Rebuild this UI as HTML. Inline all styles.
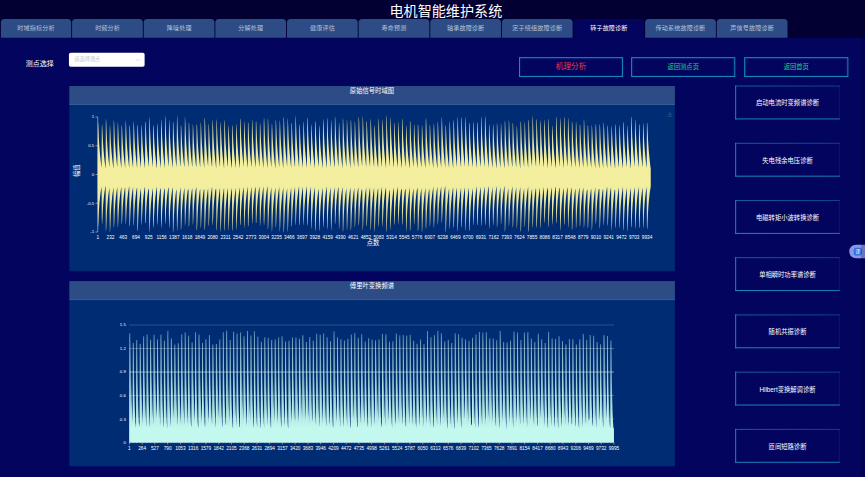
<!DOCTYPE html>
<html lang="zh"><head><meta charset="utf-8"><title>电机智能维护系统</title>
<style>
html,body{margin:0;padding:0;width:865px;height:477px;overflow:hidden;background:#03045e}
#pg{position:absolute;left:0;top:0;width:1920px;height:1059px;transform:scale(0.450521);transform-origin:0 0;background:#03045e;overflow:hidden;font-family:"Liberation Sans","Noto Sans CJK SC",sans-serif;color:#fff}
#hd{position:absolute;left:0;top:0;width:1920px;height:84px;background:#020033}
#ttl{position:absolute;left:789.7px;top:4.5px;width:400px;text-align:center;font-size:31.3px;line-height:40px;color:#fff;white-space:nowrap}
.tab{position:absolute;top:42px;width:156.8px;height:42px;background:#2d4c85;border-radius:8px 8px 0 0;text-align:center;font-size:13.5px;letter-spacing:.3px;line-height:42px;color:#b9c3d9;white-space:nowrap}
.tab.on{background:#03045e;color:#fff}
#lbl{position:absolute;left:57px;top:130px;font-size:15.5px;line-height:22px;color:#fff;white-space:nowrap}
#sel{position:absolute;left:153px;top:117px;width:168px;height:31px;background:#fff;border-radius:4px;box-sizing:border-box}
#sel span{position:absolute;left:12px;top:0;line-height:31px;font-size:11.5px;color:#c0c4cc;white-space:nowrap}
#sel svg{position:absolute;right:9px;top:10px}
.btn{position:absolute;top:126.5px;width:231px;height:44px;box-sizing:border-box;border:2px solid #1a9ac8;text-align:center;line-height:40px;font-size:14px;color:#19d68a;white-space:nowrap;box-shadow:inset 0 0 6px rgba(26,154,200,.35)}
.panel{position:absolute;left:153.6px;width:1344px;height:411px;background:#002c73}
.panel .pt{position:absolute;left:0;top:0;width:100%;height:41.6px;background:#2d4b84;box-sizing:border-box;border-bottom:1px solid #3878b4;text-align:center;font-size:14px;line-height:20px;color:#fff}
.sbtn{position:absolute;left:1632px;width:232px;height:75px;box-sizing:border-box;background:linear-gradient(#1b94c6,#1b94c6) left top/2px 100% no-repeat,linear-gradient(to right,#1b94c6,#1b86c2) left bottom/100% 2px no-repeat,linear-gradient(to right,#1765a8,#10458c) left top/100% 2px no-repeat,linear-gradient(rgba(18,79,156,.3),rgba(18,79,156,.3)) right top/2px 100% no-repeat;text-align:center;font-size:14px;line-height:79px;color:#fff;white-space:nowrap;overflow:hidden}
#cut{position:absolute;left:1864px;top:84px;width:56px;height:975px;background:#03045e}
#pill{position:absolute;left:1885px;top:543px;width:60px;height:30px;border-radius:16px;background:#8b97e6}
#pill i{position:absolute;left:10px;top:7px;width:18px;height:17px;border-radius:4px;background:#2f6fe0;font-style:normal;font-size:11px;line-height:17px;text-align:center;color:#fff}
#strip{position:absolute;left:1911px;top:0;width:9px;height:1059px;background:rgba(0,0,30,.22)}
svg text.ax{font-size:10.5px;fill:#fff;font-family:"Liberation Sans",sans-serif}
svg text.ay{font-size:9.5px;fill:#fff;font-family:"Liberation Sans",sans-serif}
svg text.axn{font-size:14px;fill:#fff;font-family:"Liberation Sans","Noto Sans CJK SC",sans-serif}
#chart{position:absolute;left:0;top:0}
</style></head><body>
<div id="pg">
<div id="hd"></div>
<div id="ttl">电机智能维护系统</div>
<div class="tab" style="left:1.5px">时域指标分析</div><div class="tab" style="left:160.4px">时频分析</div><div class="tab" style="left:319.4px">降噪处理</div><div class="tab" style="left:478.3px">分解处理</div><div class="tab" style="left:637.3px">健康评估</div><div class="tab" style="left:796.2px">寿命预测</div><div class="tab" style="left:955.2px">轴承故障诊断</div><div class="tab" style="left:1114.1px">定子绕组故障诊断</div><div class="tab on" style="left:1273.1px">转子故障诊断</div><div class="tab" style="left:1432px">传动系统故障诊断</div><div class="tab" style="left:1591px">声信号故障诊断</div>
<div id="lbl">测点选择</div>
<div id="sel"><span>请选择测点</span><svg width="12" height="12" viewBox="0 0 12 12"><path d="M2 4l4 4 4-4" fill="none" stroke="#c0c4cc" stroke-width="1.3"/></svg></div>
<div class="btn" style="left:1152px;color:#f5343f;font-size:17px">机理分析</div>
<div class="btn" style="left:1401px">返回测点页</div>
<div class="btn" style="left:1652px">返回首页</div>
<div class="panel" style="top:191px"><div class="pt">原始信号时域图</div></div>
<div class="panel" style="top:624.3px"><div class="pt">傅里叶变换频谱</div></div>
<div class="sbtn" style="top:190px"><span>启动电流时变频谱诊断</span></div><div class="sbtn" style="top:317px"><span>失电残余电压诊断</span></div><div class="sbtn" style="top:444px"><span>电磁转矩小波转换诊断</span></div><div class="sbtn" style="top:571px"><span>单相瞬时功率谱诊断</span></div><div class="sbtn" style="top:698px"><span>随机共振诊断</span></div><div class="sbtn" style="top:825px"><span>Hilbert变换解调诊断</span></div><div class="sbtn" style="top:952px"><span>匝间短路诊断</span></div>
<svg id="chart" width="1920" height="1059" viewBox="0 0 1920 1059">
<defs>
<linearGradient id="g1" x1="0" y1="254.7" x2="0" y2="520" gradientUnits="userSpaceOnUse">
<stop offset="0" stop-color="#f3ef9f" stop-opacity=".78"/><stop offset=".22" stop-color="#f3ef9f" stop-opacity=".95"/><stop offset=".42" stop-color="#f3ef9f" stop-opacity="1"/><stop offset=".58" stop-color="#f3ef9f" stop-opacity="1"/><stop offset=".78" stop-color="#f3ef9f" stop-opacity=".95"/><stop offset="1" stop-color="#f3ef9f" stop-opacity=".82"/>
</linearGradient>
<linearGradient id="g2" x1="0" y1="721.4" x2="0" y2="982.4" gradientUnits="userSpaceOnUse">
<stop offset="0" stop-color="#c2f8ee" stop-opacity=".28"/><stop offset=".4" stop-color="#c2f8ee" stop-opacity=".42"/><stop offset=".6" stop-color="#c2f8ee" stop-opacity=".7"/><stop offset=".8" stop-color="#c2f8ee" stop-opacity=".93"/><stop offset=".88" stop-color="#c2f8ee" stop-opacity="1"/><stop offset="1" stop-color="#c2f8ee" stop-opacity="1"/>
</linearGradient>
<linearGradient id="g3" x1="0" y1="721.4" x2="0" y2="982.4" gradientUnits="userSpaceOnUse">
<stop offset="0" stop-color="#c2f8ee" stop-opacity=".5"/><stop offset=".5" stop-color="#c2f8ee" stop-opacity=".85"/><stop offset="1" stop-color="#c2f8ee" stop-opacity="1"/>
</linearGradient>
</defs>
<path d="M216.9,340.5 217.4,271.5 217.9,272.8 218.4,278.3 218.9,290.8 219.4,303.4 219.9,314.2 220.4,321.9 220.9,329.4 221.4,335.2 221.9,341 222.4,346.3 222.9,351.2 223.4,356.1 223.9,360.5 224.4,364.9 224.9,369.2 225.4,372.7 225.9,290 226.4,276 226.9,277.3 227.4,287.6 227.9,299.7 228.4,311.9 228.9,320.1 229.4,327.5 229.9,333.9 230.4,339.5 230.9,345.1 231.4,349.9 231.9,354.7 232.4,359.2 232.9,363.4 233.4,367.6 233.9,371.4 234.4,374.7 234.9,263.9 235.4,265.4 235.9,270.3 236.4,283.7 236.9,297.1 237.4,308.9 237.9,317.1 238.4,325.2 238.9,331.4 239.4,337.5 239.9,343.3 240.4,348.5 240.9,353.8 241.4,358.5 241.9,363.1 242.4,367.7 242.9,371.5 243.4,299.4 243.9,277.7 244.4,278.9 244.9,288.3 245.4,300.3 245.9,312.3 246.4,320.6 246.9,328 247.4,334.4 247.9,339.9 248.4,345.4 248.9,350.2 249.4,354.8 249.9,359.4 250.4,363.5 250.9,367.6 251.4,371.5 251.9,374.6 252.4,266.5 252.9,267.8 253.4,271.9 253.9,284.9 254.4,298.1 254.9,310 255.4,318 255.9,326 256.4,332.1 256.9,338.2 257.4,343.9 257.9,349 258.4,354.1 258.9,358.8 259.4,363.3 259.9,367.8 260.4,371.6 260.9,302.4 261.4,270.9 261.9,272.3 262.4,281.4 262.9,294.1 263.4,306.8 263.9,316.1 264.4,323.8 264.9,330.8 265.4,336.6 265.9,342.5 266.4,347.6 266.9,352.5 267.4,357.4 267.9,361.7 268.4,366.1 268.9,370.3 269.4,373.6 269.9,277.2 270.4,278.5 270.9,281.4 271.4,293.3 271.9,305.2 272.4,316.4 272.9,323.7 273.4,331 273.9,336.7 274.4,342.2 274.9,347.5 275.4,352.1 275.9,356.8 276.4,361.1 276.9,365.2 277.4,369.3 277.9,372.8 278.4,308.6 278.9,267.6 279.4,269 279.9,277.6 280.4,290.6 280.9,303.7 281.4,313.5 281.9,321.5 282.4,328.8 282.9,334.8 283.4,340.8 283.9,346.1 284.4,351.2 284.9,356.2 285.4,360.7 285.9,365.2 286.4,369.5 286.9,373 287.4,277.6 287.9,278.9 288.4,281 288.9,292.9 289.4,304.7 289.9,316.2 290.4,323.5 290.9,330.7 291.4,336.5 291.9,342 292.4,347.3 292.9,351.9 293.4,356.6 293.9,360.9 294.4,365 294.9,369 295.4,372.6 295.9,318.2 296.4,269.2 296.9,270.6 297.4,278.2 297.9,291 298.4,303.9 298.9,314 299.4,321.9 299.9,329.2 300.4,335.1 300.9,341 301.4,346.3 301.9,351.3 302.4,356.3 302.9,360.8 303.4,365.2 303.9,369.5 304.4,373 304.9,276.8 305.4,278.1 305.9,279.5 306.4,291.4 306.9,303.3 307.4,315.2 307.9,322.5 308.4,329.8 308.9,335.8 309.4,341.3 309.9,346.7 310.4,351.4 310.9,356 311.4,360.4 311.9,364.5 312.4,368.6 312.9,372.3 313.4,330.7 313.9,276.9 314.4,278.2 314.9,284.5 315.4,296.5 315.9,308.6 316.4,318.3 316.9,325.6 317.4,332.6 317.9,338.1 318.4,343.7 318.9,348.7 319.4,353.4 319.9,358.1 320.4,362.2 320.9,366.3 321.4,370.5 321.9,373.7 322.4,272 322.9,270 323.4,271.3 323.9,283.4 324.4,296.3 324.9,309.1 325.4,317.2 325.9,325.1 326.4,331.6 326.9,337.5 327.4,343.4 327.9,348.4 328.4,353.4 328.9,358.1 329.4,362.5 329.9,366.9 330.4,370.9 330.9,331.3 331.4,260.1 331.9,261.6 332.4,268 332.9,281.8 333.4,295.7 333.9,307.2 334.4,315.7 334.9,323.9 335.4,330.2 335.9,336.6 336.4,342.5 336.9,347.9 337.4,353.2 337.9,358.1 338.4,362.8 338.9,367.6 339.4,371.3 339.9,286.6 340.4,276.7 340.9,277.9 341.4,288.6 341.9,300.7 342.4,312.8 342.9,320.7 343.4,328.1 343.9,334.4 344.4,340 344.9,345.6 345.4,350.3 345.9,355 346.4,359.5 346.9,363.7 347.4,367.8 347.9,371.6 348.4,374.8 348.9,273.7 349.4,275 349.9,280 350.4,292.3 350.9,304.6 351.4,315.3 351.9,322.9 352.4,330.3 352.9,336 353.4,341.7 353.9,347 354.4,351.8 354.9,356.6 355.4,360.9 355.9,365.2 356.4,369.4 356.9,372.8 357.4,284.9 357.9,265.2 358.4,266.6 358.9,277.5 359.4,290.8 359.9,304.2 360.4,313.3 360.9,321.5 361.4,328.6 361.9,334.7 362.4,340.8 362.9,346.1 363.4,351.3 363.9,356.3 364.4,360.9 364.9,365.5 365.4,369.8 365.9,373.3 366.4,257.1 366.9,258.6 367.4,263.4 367.9,277.5 368.4,291.7 368.9,304.3 369.4,312.9 369.9,321.6 370.4,328.1 370.9,334.6 371.4,340.7 371.9,346.2 372.4,351.7 372.9,356.7 373.4,361.6 373.9,366.5 374.4,370.5 374.9,294.6 375.4,266.2 375.9,267.6 376.4,277.6 376.9,290.8 377.4,304 377.9,313.4 378.4,321.5 378.9,328.7 379.4,334.7 379.9,340.8 380.4,346.1 380.9,351.3 381.4,356.3 381.9,360.8 382.4,365.4 382.9,369.7 383.4,373.2 383.9,269.6 384.4,270.9 384.9,274.5 385.4,287.2 385.9,300 386.4,311.7 386.9,319.5 387.4,327.4 387.9,333.4 388.4,339.2 388.9,344.9 389.4,349.8 389.9,354.8 390.4,359.4 390.9,363.8 391.4,368.1 391.9,371.9 392.4,297 392.9,257.1 393.4,258.6 393.9,268.4 394.4,282.5 394.9,296.8 395.4,307.3 395.9,316 396.4,323.8 396.9,330.4 397.4,336.9 397.9,342.7 398.4,348.2 398.9,353.6 399.4,358.5 399.9,363.4 400.4,368.1 400.9,370.2 401.4,277.4 401.9,278.7 402.4,281.2 402.9,293.1 403.4,305 403.9,316.3 404.4,323.6 404.9,330.9 405.4,336.6 405.9,342.1 406.4,347.4 406.9,352 407.4,356.7 407.9,361 408.4,365.1 408.9,369.2 409.4,370.3 409.9,308 410.4,259.6 410.9,261.1 411.4,269.8 411.9,283.7 412.4,297.6 412.9,308.3 413.4,316.8 413.9,324.7 414.4,331.1 414.9,337.5 415.4,343.2 415.9,348.6 416.4,354 416.9,358.8 417.4,363.5 417.9,368.2 418.4,371.9 418.9,271.8 419.4,273.1 419.9,275 420.4,287.5 420.9,300 421.4,312.2 421.9,319.8 422.4,327.5 422.9,333.7 423.4,339.4 423.9,345 424.4,349.9 424.9,354.8 425.4,359.3 425.9,363.6 426.4,367.9 426.9,371.7 427.4,326.1 427.9,275.7 428.4,277 428.9,283.8 429.4,295.9 429.9,308.1 430.4,317.8 430.9,325.2 431.4,332.2 431.9,337.8 432.4,343.4 432.9,348.4 433.4,353.2 433.9,357.9 434.4,362.1 434.9,366.3 435.4,370.4 435.9,369 436.4,275.6 436.9,276.9 437.4,278.2 437.9,290 438.4,302.1 438.9,314.2 439.4,321.6 439.9,329 440.4,335.1 440.9,340.6 441.4,346.1 441.9,350.8 442.4,355.5 442.9,360 443.4,364.1 443.9,368.3 444.4,371.7 444.9,332.3 445.4,271.9 445.9,273.2 446.4,279.5 446.9,292 447.4,304.6 447.9,314.9 448.4,322.6 448.9,330 449.4,335.7 449.9,341.5 450.4,346.8 450.9,351.7 451.4,356.6 451.9,360.9 452.4,365.2 452.9,369.6 453.4,372.9 453.9,267.8 454.4,261.1 454.9,262.5 455.4,275.1 455.9,288.9 456.4,302.8 456.9,311.6 457.4,320.1 457.9,327.2 458.4,333.5 458.9,339.9 459.4,345.2 459.9,350.6 460.4,355.8 460.9,360.5 461.4,365.2 461.9,369.5 462.4,341.8 462.9,274.7 463.4,276 463.9,281.3 464.4,293.5 464.9,305.8 465.4,316.2 465.9,323.7 466.4,331 466.9,336.6 467.4,342.3 467.9,347.5 468.4,352.2 468.9,357 469.4,361.3 469.9,365.5 470.4,369.7 470.9,368.6 471.4,281.5 471.9,266.3 472.4,267.7 472.9,278.9 473.4,292.1 473.9,305.4 474.4,314.2 474.9,322.3 475.4,329.3 475.9,335.4 476.4,341.4 476.9,346.6 477.4,351.8 477.9,356.8 478.4,361.3 478.9,365.8 479.4,370 479.9,373.6 480.4,264.2 480.9,265.6 481.4,270.6 481.9,283.9 482.4,297.3 482.9,309 483.4,317.2 483.9,325.4 484.4,331.5 484.9,337.7 485.4,343.4 485.9,348.6 486.4,353.8 486.9,358.6 487.4,363.2 487.9,367.7 488.4,371.5 488.9,293.9 489.4,270.9 489.9,272.2 490.4,282.2 490.9,294.9 491.4,307.6 491.9,316.5 492.4,324.3 492.9,331.1 493.4,337 493.9,342.8 494.4,347.9 494.9,352.8 495.4,357.6 495.9,362 496.4,366.4 496.9,370.5 497.4,373.9 497.9,266.2 498.4,267.6 498.9,271.6 499.4,284.7 499.9,297.9 500.4,309.8 500.9,317.8 501.4,325.9 501.9,332 502.4,338.1 502.9,343.8 503.4,348.9 503.9,354 504.4,358.7 504.9,363.2 505.4,367.8 505.9,371.5 506.4,307.4 506.9,277.8 507.4,279.1 507.9,287.7 508.4,299.6 508.9,311.6 509.4,320.3 509.9,327.6 510.4,334.1 510.9,339.6 511.4,345.1 511.9,349.9 512.4,354.6 512.9,359.1 513.4,363.2 513.9,367.3 514.4,371.3 514.9,374.4 515.4,277.2 515.9,278.5 516.4,281.4 516.9,293.3 517.4,305.2 517.9,316.4 518.4,323.7 518.9,331 519.4,336.7 519.9,342.2 520.4,347.5 520.9,352.1 521.4,356.7 521.9,361.1 522.4,365.2 522.9,369.3 523.4,372.7 523.9,313.1 524.4,274.5 524.9,275.8 525.4,283.9 525.9,296.1 526.4,308.5 526.9,317.7 527.4,325.3 527.9,332.1 528.4,337.8 528.9,343.4 529.4,348.5 529.9,353.3 530.4,358 530.9,362.2 531.4,366.4 531.9,370.6 532.4,373.8 532.9,263 533.4,264.4 533.9,266.8 534.4,280.2 534.9,293.7 535.4,306.7 535.9,314.9 536.4,323.2 536.9,329.7 537.4,335.9 537.9,342 538.4,347.2 538.9,352.4 539.4,357.3 539.9,362 540.4,366.6 540.9,370.6 541.4,318.3 541.9,269.4 542.4,270.7 542.9,278.3 543.4,291.1 543.9,304 544.4,314.1 544.9,321.9 545.4,329.2 545.9,335.2 546.4,341.1 546.9,346.4 547.4,351.4 547.9,356.4 548.4,360.8 548.9,365.2 549.4,369.6 549.9,373 550.4,271.2 550.9,272.5 551.4,274 551.9,286.5 552.4,299.1 552.9,311.5 553.4,319.2 553.9,326.9 554.4,333.2 554.9,339 555.4,344.7 555.9,349.5 556.4,354.4 556.9,359.1 557.4,363.4 557.9,367.7 558.4,371.5 558.9,324.9 559.4,265.7 559.9,267.1 560.4,274.1 560.9,287.3 561.4,300.6 561.9,311.3 562.4,319.4 562.9,327 563.4,333.1 563.9,339.2 564.4,344.8 564.9,349.9 565.4,355.1 565.9,359.7 566.4,364.2 566.9,368.7 567.4,372.3 567.9,271.4 568.4,269.3 568.9,270.7 569.4,282.9 569.9,295.8 570.4,308.7 570.9,316.8 571.4,324.7 571.9,331.3 572.4,337.2 572.9,343.1 573.4,348.2 573.9,353.2 574.4,358 574.9,362.4 575.4,366.8 575.9,370.8 576.4,336.5 576.9,272.1 577.4,273.4 577.9,279.2 578.4,291.7 578.9,304.3 579.4,314.8 579.9,322.5 580.4,329.9 580.9,335.6 581.4,341.4 581.9,346.7 582.4,351.6 582.9,356.5 583.4,360.8 583.9,365.1 584.4,369.4 584.9,372.9 585.4,272.8 585.9,261.5 586.4,263 586.9,275.1 587.4,288.8 587.9,302.6 588.4,311.6 588.9,320 589.4,327.2 589.9,333.5 590.4,339.8 590.9,345.2 591.4,350.6 591.9,355.7 592.4,360.4 592.9,365.2 593.4,369.5 593.9,373.1 594.4,262.9 594.9,264.3 595.4,269.8 595.9,283.2 596.4,296.8 596.9,308.5 597.4,316.8 597.9,324.9 598.4,331.1 598.9,337.3 599.4,343.1 599.9,348.4 600.4,353.6 600.9,358.4 601.4,363 601.9,367.7 602.4,371.5 602.9,292.2 603.4,273.8 603.9,275.2 604.4,285.3 604.9,297.6 605.4,310.1 605.9,318.6 606.4,326.1 606.9,332.7 607.4,338.4 607.9,344.1 608.4,349 608.9,353.9 609.4,358.5 609.9,362.8 610.4,367 610.9,371 611.4,374.3 611.9,265.6 612.4,267 612.9,271.5 613.4,284.7 613.9,297.9 614.4,309.7 614.9,317.8 615.4,325.9 615.9,331.9 616.4,338 616.9,343.8 617.4,348.9 617.9,354 618.4,358.7 618.9,363.3 619.4,367.8 619.9,371.6 620.4,295.5 620.9,267.4 621.4,268.8 621.9,278.6 622.4,291.7 622.9,304.8 623.4,314.1 623.9,322.1 624.4,329.2 624.9,335.3 625.4,341.3 625.9,346.5 626.4,351.6 626.9,356.6 627.4,361.1 627.9,365.6 628.4,369.9 628.9,373.3 629.4,258.7 629.9,260.2 630.4,264 630.9,277.9 631.4,291.9 631.9,304.7 632.4,313.3 632.9,321.8 633.4,328.4 633.9,334.8 634.4,340.9 634.9,346.4 635.4,351.8 635.9,356.8 636.4,361.6 636.9,366.4 637.4,370.4 637.9,300.9 638.4,262.7 638.9,264.1 639.4,273.5 639.9,287 640.4,300.7 640.9,310.7 641.4,319 641.9,326.5 642.4,332.8 642.9,339.1 643.4,344.6 643.9,349.9 644.4,355.1 644.9,359.7 645.4,364.4 645.9,368.9 646.4,372.5 646.9,272 647.4,273.3 647.9,275.9 648.4,288.4 648.9,300.9 649.4,312.8 649.9,320.4 650.4,328.1 650.9,334.1 651.4,339.8 651.9,345.4 652.4,350.3 652.9,355.1 653.4,359.7 653.9,364 654.4,368.2 654.9,371.9 655.4,306.3 655.9,256.9 656.4,258.4 656.9,267.3 657.4,281.4 657.9,295.7 658.4,306.6 658.9,315.3 659.4,323.3 659.9,329.9 660.4,336.4 660.9,342.2 661.4,347.8 661.9,353.3 662.4,358.1 662.9,363 663.4,367.8 663.9,371.6 664.4,275.7 664.9,277 665.4,278.8 665.9,290.8 666.4,302.9 666.9,314.7 667.4,322.1 667.9,329.5 668.4,335.5 668.9,341 669.4,346.5 669.9,351.2 670.4,355.9 670.9,360.3 671.4,364.4 671.9,368.6 672.4,372.2 672.9,322.6 673.4,269.5 673.9,270.9 674.4,278.1 674.9,290.9 675.4,303.7 675.9,313.9 676.4,321.8 676.9,329.1 677.4,335 677.9,340.9 678.4,346.3 678.9,351.3 679.4,356.3 679.9,360.7 680.4,365.1 680.9,369.5 681.4,372.9 681.9,261.1 682.4,262.5 682.9,264 683.4,277.3 683.9,290.9 684.4,304.6 684.9,313 685.4,321.4 685.9,328.3 686.4,334.5 686.9,340.8 687.4,346.1 687.9,351.4 688.4,356.4 688.9,361.1 689.4,365.8 689.9,370 690.4,334 690.9,275.5 691.4,276.8 691.9,282.8 692.4,294.9 692.9,307.1 693.4,317.2 693.9,324.6 694.4,331.7 694.9,337.3 695.4,342.9 695.9,348 696.4,352.8 696.9,357.5 697.4,361.7 697.9,365.9 698.4,370.1 698.9,373.4 699.4,274.8 699.9,268.5 700.4,269.8 700.9,281.7 701.4,294.7 701.9,307.7 702.4,316.1 702.9,324 703.4,330.7 703.9,336.7 704.4,342.6 704.9,347.7 705.4,352.8 705.9,357.6 706.4,362.1 706.9,366.5 707.4,370.6 707.9,343.1 708.4,277.9 708.9,279.2 709.4,284.4 709.9,296.2 710.4,308.1 710.9,318.2 711.4,325.5 711.9,332.6 712.4,338.1 712.9,343.5 713.4,348.6 713.9,353.2 714.4,357.9 714.9,362 715.4,366.1 715.9,370.2 716.4,373.5 716.9,279.8 717.4,264.3 717.9,265.7 718.4,277.1 718.9,290.6 719.4,304 719.9,313 720.4,321.3 720.9,328.3 721.4,334.5 721.9,340.7 722.4,346 722.9,351.2 723.4,356.3 723.9,360.9 724.4,365.5 724.9,369.8 725.4,373.3 725.9,261.4 726.4,262.8 726.9,267.9 727.4,281.5 727.9,295.2 728.4,307.2 728.9,315.6 729.4,323.9 729.9,330.2 730.4,336.5 730.9,342.4 731.4,347.7 731.9,353.1 732.4,357.9 732.9,362.6 733.4,367.3 733.9,371.1 734.4,290.3 734.9,266.4 735.4,267.8 735.9,278.1 736.4,291.3 736.9,304.5 737.4,313.8 737.9,321.8 738.4,328.9 738.9,335 739.4,341.1 739.9,346.3 740.4,351.5 740.9,356.5 741.4,361 741.9,365.6 742.4,369.8 742.9,372 743.4,258.7 743.9,260.2 744.4,264.5 744.9,278.4 745.4,292.4 745.9,305 746.4,313.6 746.9,322.1 747.4,328.6 747.9,335 748.4,341.1 748.9,346.5 749.4,352 749.9,357 750.4,361.8 750.9,366.5 751.4,370.5 751.9,303.3 752.4,272.1 752.9,273.5 753.4,282.5 753.9,295.1 754.4,307.7 754.9,316.8 755.4,324.5 755.9,331.3 756.4,337.1 756.9,342.9 757.4,348 757.9,352.9 758.4,357.7 758.9,362 759.4,366.3 759.9,370.4 760.4,373.8 760.9,262.7 761.4,264.2 761.9,267.5 762.4,280.9 762.9,294.4 763.4,307.1 763.9,315.3 764.4,323.6 764.9,330 765.4,336.2 765.9,342.2 766.4,347.5 766.9,352.7 767.4,357.6 767.9,362.2 768.4,366.9 768.9,370.8 769.4,307.3 769.9,265.7 770.4,267.1 770.9,275.8 771.4,289 771.9,302.3 772.4,312.3 772.9,320.4 773.4,327.8 773.9,333.9 774.4,340 774.9,345.4 775.4,350.6 775.9,355.7 776.4,360.3 776.9,364.8 777.4,369.2 777.9,372.8 778.4,265.2 778.9,266.7 779.4,269 779.9,282.2 780.4,295.4 780.9,308.2 781.4,316.3 781.9,324.4 782.4,330.8 782.9,336.9 783.4,342.8 783.9,347.9 784.4,353.1 784.9,357.9 785.4,362.4 785.9,367 786.4,370.9 786.9,317.9 787.4,268.7 787.9,270.1 788.4,277.7 788.9,290.6 789.4,303.6 789.9,313.7 790.4,321.6 790.9,328.9 791.4,334.9 791.9,340.8 792.4,346.2 792.9,351.2 793.4,356.2 793.9,360.6 794.4,365.1 794.9,369.5 795.4,369.5 795.9,259.2 796.4,260.7 796.9,262.3 797.4,276.1 797.9,290 798.4,303.7 798.9,312.2 799.4,320.7 799.9,327.6 800.4,334 800.9,340.2 801.4,345.6 801.9,351 802.4,356.1 802.9,360.9 803.4,365.7 803.9,369 804.4,320.7 804.9,257.5 805.4,259 805.9,266.5 806.4,280.6 806.9,294.7 807.4,306.2 807.9,314.8 808.4,323 808.9,329.5 809.4,336 809.9,341.9 810.4,347.4 810.9,352.9 811.4,357.8 811.9,362.7 812.4,367.5 812.9,371.3 813.4,270.9 813.9,268.8 814.4,270.2 814.9,282.4 815.4,295.4 815.9,308.4 816.4,316.5 816.9,324.5 817.4,331.1 817.9,337 818.4,343 818.9,348 819.4,353 819.9,357.8 820.4,362.3 820.9,366.7 821.4,370.8 821.9,332.9 822.4,263.8 822.9,265.2 823.4,271.5 823.9,284.9 824.4,298.3 824.9,309.6 825.4,317.8 825.9,325.7 826.4,331.9 826.9,338.1 827.4,343.8 827.9,349 828.4,354.2 828.9,358.9 829.4,363.5 829.9,368.1 830.4,371.8 830.9,287.9 831.4,278.1 831.9,279.3 832.4,289.8 832.9,301.8 833.4,313.8 833.9,321.6 834.4,328.9 834.9,335.1 835.4,340.6 835.9,346.1 836.4,350.8 836.9,355.4 837.4,359.9 837.9,364 838.4,368.1 838.9,370.2 839.4,371.9 839.9,262.8 840.4,264.3 840.9,269.7 841.4,283.2 841.9,296.7 842.4,308.4 842.9,316.7 843.4,324.9 843.9,331.1 844.4,337.3 844.9,343.1 845.4,348.4 845.9,353.6 846.4,358.4 846.9,363 847.4,367.7 847.9,371.5 848.4,284.6 848.9,264.7 849.4,266.2 849.9,277.1 850.4,290.4 850.9,303.9 851.4,313 851.9,321.2 852.4,328.3 852.9,334.5 853.4,340.7 853.9,346 854.4,351.2 854.9,356.2 855.4,360.8 855.9,365.4 856.4,369.7 856.9,373.3 857.4,256.1 857.9,257.6 858.4,262.5 858.9,276.6 859.4,290.9 859.9,303.6 860.4,312.3 860.9,321.1 861.4,327.6 861.9,334.2 862.4,340.3 862.9,345.9 863.4,351.4 863.9,356.5 864.4,361.4 864.9,366.3 865.4,370.3 865.9,290.3 866.4,260.7 866.9,262.1 867.4,272.5 867.9,286.3 868.4,300.2 868.9,310 869.4,318.5 869.9,326 870.4,332.3 870.9,338.7 871.4,344.2 871.9,349.6 872.4,354.9 872.9,359.6 873.4,364.4 873.9,368.9 874.4,372.5 874.9,272.1 875.4,273.4 875.9,276.9 876.4,289.3 876.9,301.8 877.4,313.4 877.9,321 878.4,328.7 878.9,334.5 879.4,340.3 879.9,345.8 880.4,350.6 880.9,355.5 881.4,360 881.9,364.3 882.4,368.6 882.9,372.2 883.4,306.3 883.9,270.4 884.4,271.8 884.9,280.6 885.4,293.3 885.9,306.1 886.4,315.5 886.9,323.3 887.4,330.3 887.9,336.2 888.4,342.1 888.9,347.2 889.4,352.2 889.9,357.1 890.4,361.5 890.9,365.8 891.4,370.1 891.9,373.5 892.4,263.3 892.9,264.7 893.4,267.6 893.9,280.9 894.4,294.4 894.9,307.1 895.4,315.4 895.9,323.6 896.4,330.1 896.9,336.3 897.4,342.2 897.9,347.5 898.4,352.7 898.9,357.6 899.4,362.2 899.9,366.8 900.4,370.8 900.9,319.8 901.4,278.6 901.9,279.8 902.4,287.2 902.9,299.1 903.4,310.9 903.9,320 904.4,327.3 904.9,334 905.4,339.4 905.9,344.9 906.4,349.7 906.9,354.3 907.4,358.9 907.9,363 908.4,367.1 908.9,371.1 909.4,374.2 909.9,267.9 910.4,269.3 910.9,271.2 911.4,284.1 911.9,297 912.4,309.6 912.9,317.6 913.4,325.5 913.9,331.8 914.4,337.8 914.9,343.6 915.4,348.6 915.9,353.7 916.4,358.4 916.9,362.8 917.4,367.3 917.9,371.2 918.4,325.8 918.9,275.2 919.4,276.5 919.9,283.3 920.4,295.5 920.9,307.7 921.4,317.5 921.9,324.9 922.4,331.9 922.9,337.6 923.4,343.2 923.9,348.3 924.4,353 924.9,357.8 925.4,362 925.9,366.2 926.4,370.3 926.9,373.6 927.4,275.7 927.9,276.9 928.4,278.2 928.9,290 929.4,302.1 929.9,314.2 930.4,321.6 930.9,329 931.4,335.1 931.9,340.7 932.4,346.1 932.9,350.8 933.4,355.5 933.9,360 934.4,364.1 934.9,368.3 935.4,372 935.9,335 936.4,277.6 936.9,278.8 937.4,284.8 937.9,296.7 938.4,308.6 938.9,318.5 939.4,325.8 939.9,332.8 940.4,338.3 940.9,343.8 941.4,348.8 941.9,353.4 942.4,358.1 942.9,362.2 943.4,366.3 943.9,370.4 944.4,373.7 944.9,268.8 945.4,262.2 945.9,263.6 946.4,276.1 946.9,289.8 947.4,303.5 947.9,312.3 948.4,320.7 948.9,327.7 949.4,334 949.9,340.3 950.4,345.6 950.9,350.9 951.4,356 951.9,360.7 952.4,365.4 952.9,369.7 953.4,342.2 953.9,275.9 954.4,277.2 954.9,282.4 955.4,294.5 955.9,306.6 956.4,316.9 956.9,324.4 957.4,331.6 957.9,337.2 958.4,342.7 958.9,347.9 959.4,352.6 959.9,357.3 960.4,361.6 960.9,365.7 961.4,369.9 961.9,373.2 962.4,288.1 962.9,273.8 963.4,275.1 963.9,285.6 964.4,298 964.9,310.5 965.4,318.8 965.9,326.4 966.4,332.9 966.9,338.6 967.4,344.3 967.9,349.2 968.4,354 968.9,358.7 969.4,362.9 969.9,367.2 970.4,371.1 970.9,374.4 971.4,269.8 971.9,271.2 972.4,275.9 972.9,288.6 973.4,301.4 973.9,312.6 974.4,320.4 974.9,328.2 975.4,334.1 975.9,339.9 976.4,345.4 976.9,350.4 977.4,355.4 977.9,359.9 978.4,364.3 978.9,368.6 979.4,372.2 979.9,284.9 980.4,259.6 980.9,261.1 981.4,272 981.9,285.9 982.4,299.9 982.9,309.7 983.4,318.2 983.9,325.7 984.4,332.1 984.9,338.5 985.4,344.1 985.9,349.5 986.4,354.8 986.9,359.5 987.4,364.3 987.9,368.8 988.4,372.5 988.9,276.8 989.4,278.1 989.9,281.8 990.4,293.7 990.9,305.7 991.4,316.6 991.9,323.9 992.4,331.3 992.9,336.9 993.4,342.4 993.9,347.6 994.4,352.3 994.9,357 995.4,361.2 995.9,365.4 996.4,369.5 996.9,372.9 997.4,301 997.9,269.1 998.4,270.4 998.9,279.7 999.4,292.6 999.9,305.5 1000.4,314.9 1000.9,322.8 1001.4,329.9 1001.9,335.8 1002.4,341.7 1002.9,346.9 1003.4,352 1003.9,356.9 1004.4,361.3 1004.9,365.7 1005.4,370 1005.9,373.4 1006.4,266 1006.9,267.4 1007.4,270.7 1007.9,283.7 1008.4,296.9 1008.9,309.2 1009.4,317.2 1009.9,325.3 1010.4,331.6 1010.9,337.6 1011.4,343.4 1011.9,348.5 1012.4,353.7 1012.9,358.4 1013.4,362.9 1013.9,367.4 1014.4,371.3 1014.9,303 1015.4,259.1 1015.9,260.6 1016.4,269.8 1016.9,283.7 1017.4,297.7 1017.9,308.3 1018.4,316.8 1018.9,324.6 1019.4,331 1019.9,337.5 1020.4,343.2 1020.9,348.6 1021.4,354 1021.9,358.8 1022.4,363.6 1022.9,368.3 1023.4,372 1023.9,259.8 1024.4,261.3 1024.9,263.8 1025.4,277.5 1025.9,291.3 1026.4,304.6 1026.9,313.1 1027.4,321.6 1027.9,328.3 1028.4,334.6 1028.9,340.8 1029.4,346.2 1029.9,351.6 1030.4,356.6 1030.9,361.3 1031.4,366.1 1031.9,370.2 1032.4,312.5 1032.9,259.5 1033.4,260.9 1033.9,269.2 1034.4,283.1 1034.9,297 1035.4,307.9 1035.9,316.5 1036.4,324.4 1036.9,330.8 1037.4,337.2 1037.9,342.9 1038.4,348.4 1038.9,353.8 1039.4,358.6 1039.9,363.3 1040.4,368.1 1040.9,371.8 1041.4,272 1041.9,273.4 1042.4,274.8 1042.9,287.2 1043.4,299.7 1043.9,312.1 1044.4,319.7 1044.9,327.4 1045.4,333.6 1045.9,339.3 1046.4,345 1046.9,349.8 1047.4,354.7 1047.9,359.2 1048.4,363.5 1048.9,367.8 1049.4,371.6 1049.9,326.9 1050.4,269.5 1050.9,270.9 1051.4,277.7 1051.9,290.5 1052.4,303.3 1052.9,313.7 1053.4,321.5 1053.9,329 1054.4,334.9 1054.9,340.8 1055.4,346.1 1055.9,351.1 1056.4,356.1 1056.9,360.5 1057.4,364.9 1057.9,369.3 1058.4,372.8 1058.9,273.4 1059.4,271.4 1059.9,272.8 1060.4,284.7 1060.9,297.4 1061.4,310.1 1061.9,318.1 1062.4,325.9 1062.9,332.3 1063.4,338.1 1063.9,343.9 1064.4,348.9 1064.9,353.8 1065.4,358.5 1065.9,362.8 1066.4,367.2 1066.9,371.1 1067.4,330.7 1067.9,258.8 1068.4,260.3 1068.9,266.8 1069.4,280.7 1069.9,294.7 1070.4,306.4 1070.9,315 1071.4,323.2 1071.9,329.7 1072.4,336.1 1072.9,342 1073.4,347.5 1073.9,352.9 1074.4,357.8 1074.9,362.6 1075.4,367.4 1075.9,371.2 1076.4,269.4 1076.9,257.8 1077.4,259.3 1077.9,271.8 1078.4,285.9 1078.9,300.1 1079.4,309.4 1079.9,318.1 1080.4,325.4 1080.9,331.9 1081.4,338.5 1081.9,344 1082.4,349.5 1082.9,354.8 1083.4,359.6 1083.9,364.5 1084.4,369 1084.9,372.7 1085.4,275.3 1085.9,276.6 1086.4,281.5 1086.9,293.7 1087.4,305.8 1087.9,316.4 1088.4,323.8 1088.9,331.1 1089.4,336.7 1089.9,342.3 1090.4,347.5 1090.9,352.3 1091.4,357 1091.9,361.3 1092.4,365.5 1092.9,369.7 1093.4,373 1093.9,293.5 1094.4,275.4 1094.9,276.7 1095.4,286.7 1095.9,298.9 1096.4,311.1 1096.9,319.5 1097.4,327 1097.9,333.5 1098.4,339.1 1098.9,344.7 1099.4,349.6 1099.9,354.3 1100.4,358.9 1100.9,363.1 1101.4,367.3 1101.9,371.2 1102.4,373.7 1102.9,273.4 1103.4,274.7 1103.9,278.9 1104.4,291.2 1104.9,303.6 1105.4,314.7 1105.9,322.2 1106.4,329.8 1106.9,335.5 1107.4,341.2 1107.9,346.5 1108.4,351.4 1108.9,356.2 1109.4,360.6 1109.9,364.8 1110.4,369.1 1110.9,372.6 1111.4,300.5 1111.9,274 1112.4,275.3 1112.9,284.6 1113.4,297 1113.9,309.4 1114.4,318.2 1114.9,325.7 1115.4,332.4 1115.9,338.1 1116.4,343.8 1116.9,348.8 1117.4,353.6 1117.9,358.3 1118.4,362.5 1118.9,366.8 1119.4,370.8 1119.9,374.1 1120.4,267.6 1120.9,268.9 1121.4,272.5 1121.9,285.5 1122.4,298.5 1122.9,310.4 1123.4,318.4 1123.9,326.3 1124.4,332.4 1124.9,338.4 1125.4,344.1 1125.9,349.2 1126.4,354.2 1126.9,358.9 1127.4,363.4 1127.9,367.8 1128.4,371.6 1128.9,303.1 1129.4,265.8 1129.9,267.2 1130.4,276.4 1130.9,289.6 1131.4,302.9 1131.9,312.7 1132.4,320.8 1132.9,328.1 1133.4,334.2 1133.9,340.3 1134.4,345.7 1134.9,350.8 1135.4,355.9 1135.9,360.4 1136.4,365 1136.9,368.9 1137.4,369.4 1137.9,272.5 1138.4,273.8 1138.9,276.5 1139.4,288.9 1139.9,301.3 1140.4,313.1 1140.9,320.7 1141.4,328.4 1141.9,334.4 1142.4,340.1 1142.9,345.6 1143.4,350.4 1143.9,355.3 1144.4,359.8 1144.9,364.1 1145.4,368.3 1145.9,372 1146.4,320 1146.9,279 1147.4,280.3 1147.9,287.6 1148.4,299.4 1148.9,311.2 1149.4,320.3 1149.9,327.5 1150.4,334.2 1150.9,339.6 1151.4,345 1151.9,349.9 1152.4,354.5 1152.9,359 1153.4,363.1 1153.9,367.1 1154.4,371.1 1154.9,374.3 1155.4,268.9 1155.9,270.2 1156.4,272.1 1156.9,284.9 1157.4,297.7 1157.9,310.3 1158.4,318.1 1158.9,326 1159.4,332.3 1159.9,338.2 1160.4,344 1160.9,348.9 1161.4,353.9 1161.9,358.6 1162.4,363 1162.9,367.4 1163.4,371.3 1163.9,323.3 1164.4,270.6 1164.9,272 1165.4,279.1 1165.9,291.8 1166.4,304.5 1166.9,314.6 1167.4,322.4 1167.9,329.7 1168.4,335.5 1168.9,341.4 1169.4,346.7 1169.9,351.6 1170.4,356.6 1170.9,360.9 1171.4,365.3 1171.9,369.6 1172.4,372.2 1172.9,265.4 1173.4,266.8 1173.9,268.2 1174.4,281.1 1174.9,294.3 1175.4,307.5 1175.9,315.6 1176.4,323.7 1176.9,330.3 1177.4,336.4 1177.9,342.4 1178.4,347.5 1178.9,352.6 1179.4,357.5 1179.9,362 1180.4,366.5 1180.9,370.6 1181.4,325.3 1181.9,257.3 1182.4,258.8 1182.9,265.8 1183.4,279.9 1183.9,294.1 1184.4,305.7 1184.9,314.4 1185.4,322.7 1185.9,329.2 1186.4,335.7 1186.9,341.7 1187.4,347.2 1187.9,352.7 1188.4,357.6 1188.9,362.4 1189.4,367.3 1189.9,371.1 1190.4,270.5 1190.9,263.9 1191.4,265.3 1191.9,277.6 1192.4,291.1 1192.9,304.7 1193.4,313.3 1193.9,321.6 1194.4,328.5 1194.9,334.7 1195.4,340.9 1195.9,346.2 1196.4,351.4 1196.9,356.5 1197.4,361.1 1197.9,365.7 1198.4,369.9 1198.9,338.7 1199.4,267.1 1199.9,268.5 1200.4,274.2 1200.9,287.2 1201.4,300.3 1201.9,311.4 1202.4,319.4 1202.9,327.2 1203.4,333.2 1203.9,339.2 1204.4,344.8 1204.9,349.9 1205.4,355 1205.9,359.5 1206.4,364 1206.9,368.5 1207.4,370.9 1207.9,280.8 1208.4,265.5 1208.9,266.9 1209.4,278.2 1209.9,291.5 1210.4,304.8 1210.9,313.7 1211.4,321.9 1211.9,328.9 1212.4,335 1212.9,341.1 1213.4,346.4 1213.9,351.6 1214.4,356.5 1214.9,361.1 1215.4,365.7 1215.9,369.9 1216.4,373.5 1216.9,263.4 1217.4,264.8 1217.9,269.8 1218.4,283.2 1218.9,296.7 1219.4,308.5 1219.9,316.8 1220.4,324.9 1220.9,331.1 1221.4,337.3 1221.9,343.1 1222.4,348.4 1222.9,353.6 1223.4,358.4 1223.9,363 1224.4,367.6 1224.9,371.4 1225.4,299.7 1225.9,278.1 1226.4,279.4 1226.9,288.7 1227.4,300.6 1227.9,312.6 1228.4,320.9 1228.9,328.2 1229.4,334.6 1229.9,340.1 1230.4,345.6 1230.9,350.3 1231.4,355 1231.9,359.5 1232.4,363.6 1232.9,367.7 1233.4,371.5 1233.9,372.1 1234.4,258.2 1234.9,259.7 1235.4,264 1235.9,277.9 1236.4,292 1236.9,304.7 1237.4,313.3 1237.9,321.8 1238.4,328.4 1238.9,334.8 1239.4,340.9 1239.9,346.4 1240.4,351.8 1240.9,356.8 1241.4,361.6 1241.9,366.5 1242.4,370.5 1242.9,295.6 1243.4,261.6 1243.9,263 1244.4,272.9 1244.9,286.6 1245.4,300.4 1245.9,310.3 1246.4,318.7 1246.9,326.2 1247.4,332.5 1247.9,338.8 1248.4,344.4 1248.9,349.7 1249.4,354.9 1249.9,359.7 1250.4,364.4 1250.9,368.9 1251.4,372.5 1251.9,258.6 1252.4,260.1 1252.9,263.5 1253.4,277.4 1253.9,291.4 1254.4,304.4 1254.9,313 1255.4,321.5 1255.9,328.2 1256.4,334.6 1256.9,340.7 1257.4,346.2 1257.9,351.6 1258.4,356.6 1258.9,361.4 1259.4,366.2 1259.9,370.3 1260.4,304.3 1260.9,261.1 1261.4,262.5 1261.9,271.6 1262.4,285.3 1262.9,299.1 1263.4,309.5 1263.9,317.9 1264.4,325.6 1264.9,331.9 1265.4,338.2 1265.9,343.9 1266.4,349.2 1266.9,354.5 1267.4,359.2 1267.9,364 1268.4,368.6 1268.9,372.2 1269.4,269.5 1269.9,270.9 1270.4,273.2 1270.9,285.9 1271.4,298.7 1271.9,310.9 1272.4,318.8 1272.9,326.6 1273.4,332.8 1273.9,338.7 1274.4,344.4 1274.9,349.3 1275.4,354.3 1275.9,358.9 1276.4,363.3 1276.9,367.7 1277.4,371.5 1277.9,318.7 1278.4,270 1278.9,271.4 1279.4,278.9 1279.9,291.7 1280.4,304.5 1280.9,314.5 1281.4,322.3 1281.9,329.6 1282.4,335.4 1282.9,341.3 1283.4,346.6 1283.9,351.6 1284.4,356.5 1284.9,360.9 1285.4,365.3 1285.9,369.7 1286.4,373.1 1286.9,276 1287.4,277.3 1287.9,278.7 1288.4,290.7 1288.9,302.7 1289.4,314.7 1289.9,322.1 1290.4,329.4 1290.9,335.4 1291.4,341 1291.9,346.4 1292.4,351.1 1292.9,355.8 1293.4,360.2 1293.9,364.4 1294.4,368.5 1294.9,372.2 1295.4,324.4 1295.9,264.6 1296.4,266 1296.9,273.1 1297.4,286.4 1297.9,299.8 1298.4,310.6 1298.9,318.8 1299.4,326.5 1299.9,332.6 1300.4,338.8 1300.9,344.4 1301.4,349.6 1301.9,354.8 1302.4,359.4 1302.9,364 1303.4,368.6 1303.9,372.2 1304.4,280 1304.9,278.1 1305.4,279.4 1305.9,290.7 1306.4,302.6 1306.9,314.6 1307.4,322.1 1307.9,329.4 1308.4,335.5 1308.9,341 1309.4,346.4 1309.9,351.1 1310.4,355.7 1310.9,360.2 1311.4,364.3 1311.9,368.4 1312.4,372.1 1312.9,338.9 1313.4,277.3 1313.9,278.6 1314.4,284.2 1314.9,296.1 1315.4,308.1 1315.9,318.1 1316.4,325.4 1316.9,332.5 1317.4,338 1317.9,343.5 1318.4,348.6 1318.9,353.2 1319.4,357.9 1319.9,362 1320.4,366.1 1320.9,370.3 1321.4,373.5 1321.9,284.8 1322.4,274.7 1322.9,276 1323.4,286.9 1323.9,299.2 1324.4,311.5 1324.9,319.6 1325.4,327.1 1325.9,333.5 1326.4,339.2 1326.9,344.8 1327.4,349.6 1327.9,354.4 1328.4,359 1328.9,363.3 1329.4,367.5 1329.9,371.4 1330.4,374.6 1330.9,275.1 1331.4,276.4 1331.9,281.3 1332.4,293.4 1332.9,305.7 1333.4,316.2 1333.9,323.7 1334.4,331 1334.9,336.6 1335.4,342.2 1335.9,347.5 1336.4,352.2 1336.9,356.9 1337.4,361.2 1337.9,365.4 1338.4,369.6 1338.9,373 1339.4,290.4 1339.9,271.7 1340.4,273 1340.9,283.3 1341.4,295.9 1341.9,308.6 1342.4,317.2 1342.9,325 1343.4,331.7 1343.9,337.5 1344.4,343.3 1344.9,348.3 1345.4,353.2 1345.9,358 1346.4,362.3 1346.9,366.7 1347.4,370.7 1347.9,374.1 1348.4,277.5 1348.9,278.8 1349.4,282.8 1349.9,294.7 1350.4,306.6 1350.9,317.3 1351.4,324.6 1351.9,331.9 1352.4,337.4 1352.9,342.8 1353.4,348 1353.9,352.7 1354.4,357.3 1354.9,361.5 1355.4,365.6 1355.9,369.7 1356.4,373.1 1356.9,304.6 1357.4,279.3 1357.9,280.5 1358.4,289.4 1358.9,301.2 1359.4,313 1359.9,321.4 1360.4,328.6 1360.9,335 1361.4,340.4 1361.9,345.8 1362.4,350.6 1362.9,355.2 1363.4,359.6 1363.9,363.7 1364.4,367.7 1364.9,371.6 1365.4,374.7 1365.9,275.2 1366.4,276.4 1366.9,279.8 1367.4,291.9 1367.9,304.1 1368.4,315.3 1368.9,322.8 1369.4,330.2 1369.9,335.9 1370.4,341.5 1370.9,346.9 1371.4,351.6 1371.9,356.3 1372.4,360.7 1372.9,364.9 1373.4,369.1 1373.9,372.6 1374.4,310.7 1374.9,276.9 1375.4,278.2 1375.9,286.5 1376.4,298.5 1376.9,310.5 1377.4,319.5 1377.9,326.8 1378.4,333.5 1378.9,339 1379.4,344.6 1379.9,349.5 1380.4,354.1 1380.9,358.8 1381.4,362.9 1381.9,367 1382.4,371 1382.9,374.2 1383.4,270.2 1383.9,271.6 1384.4,274.3 1384.9,286.9 1385.4,299.6 1385.9,311.6 1386.4,319.4 1386.9,327.2 1387.4,333.3 1387.9,339.1 1388.4,344.8 1388.9,349.7 1389.4,354.7 1389.9,359.2 1390.4,363.6 1390.9,368 1391.4,371.7 1391.9,319.7 1392.4,278.5 1392.9,279.8 1393.4,287.2 1393.9,299 1394.4,310.9 1394.9,320 1395.4,327.3 1395.9,333.9 1396.4,339.4 1396.9,344.8 1397.4,349.7 1397.9,354.3 1398.4,358.9 1398.9,363 1399.4,367.1 1399.9,371.1 1400.4,373.8 1400.9,258.5 1401.4,260 1401.9,262 1402.4,275.9 1402.9,289.9 1403.4,303.5 1403.9,312.1 1404.4,320.6 1404.9,327.5 1405.4,333.9 1405.9,340.2 1406.4,345.6 1406.9,351 1407.4,356.1 1407.9,360.9 1408.4,365.7 1408.9,369.9 1409.4,320.2 1409.9,265.1 1410.4,266.5 1410.9,274 1411.4,287.2 1411.9,300.6 1412.4,311.2 1412.9,319.3 1413.4,326.9 1413.9,333.1 1414.4,339.2 1414.9,344.7 1415.4,349.9 1415.9,355.1 1416.4,359.7 1416.9,364.2 1417.4,368.8 1417.9,372.3 1418.4,274.9 1418.9,276.2 1419.4,277.5 1419.9,289.4 1420.4,301.5 1420.9,313.7 1421.4,321.2 1421.9,328.6 1422.4,334.8 1422.9,340.4 1423.4,345.9 1423.9,350.6 1424.4,355.3 1424.9,359.8 1425.4,364 1425.9,368.2 1426.4,371.9 1426.9,332.9 1427.4,273.2 1427.9,274.5 1428.4,280.7 1428.9,293.1 1429.4,305.5 1429.9,315.7 1430.4,323.3 1430.9,330.6 1431.4,336.3 1431.9,342 1432.4,347.2 1432.9,352.1 1433.4,356.9 1433.9,361.2 1434.4,365.5 1434.9,369.8 1435.4,373.1 1435.9,277.8 1436.4,271.7 1436.9,273 1437.4,284.5 1437.9,297.2 1438.4,309.8 1438.9,318 1439.4,325.7 1439.9,332.2 1440.4,338 1440.9,343.8 1441.4,348.8 1441.9,353.7 1442.4,358.4 1442.9,362.7 1443.4,367.1 1443.9,371 1444.4,374.4 1444.4,414.6 1443.9,417.3 1443.4,420.3 1442.9,423.6 1442.4,427 1441.9,430.9 1441.4,435.1 1440.9,439.3 1440.4,444.5 1439.9,449.7 1439.4,455.7 1438.9,463.3 1438.4,471.3 1437.9,483.9 1437.4,496.4 1436.9,507.7 1436.4,509.1 1435.9,502.6 1435.4,415 1434.9,417.6 1434.4,420.8 1433.9,424.1 1433.4,427.4 1432.9,431.5 1432.4,435.6 1431.9,440.1 1431.4,445.1 1430.9,450.2 1430.4,457.1 1429.9,464.5 1429.4,474.5 1428.9,486.7 1428.4,498.7 1427.9,504.7 1427.4,506.1 1426.9,444 1426.4,416.2 1425.9,419.1 1425.4,422.3 1424.9,425.5 1424.4,429.2 1423.9,433.3 1423.4,437.4 1422.9,442.4 1422.4,447.4 1421.9,453.1 1421.4,460.5 1420.9,467.9 1420.4,480 1419.9,492.1 1419.4,503.9 1418.9,505.3 1418.4,506.6 1417.9,415.3 1417.4,417.9 1416.9,421.2 1416.4,424.5 1415.9,427.7 1415.4,431.9 1414.9,436.1 1414.4,440.6 1413.9,445.8 1413.4,450.9 1412.9,457.8 1412.4,465.3 1411.9,475.1 1411.4,487.5 1410.9,499.7 1410.4,506.7 1409.9,508 1409.4,453.6 1408.9,415.7 1408.4,418.5 1407.9,421.7 1407.4,424.9 1406.9,428.5 1406.4,432.6 1405.9,436.6 1405.4,441.4 1404.9,446.4 1404.4,451.9 1403.9,459.2 1403.4,466.5 1402.9,478.2 1402.4,490.2 1401.9,502 1401.4,503.9 1400.9,505.3 1400.4,418 1399.9,419.2 1399.4,422.6 1398.9,426.1 1398.4,429.5 1397.9,433.8 1397.4,438.2 1396.9,442.9 1396.4,448.3 1395.9,453.7 1395.4,460.7 1394.9,468.6 1394.4,478.6 1393.9,491.6 1393.4,504.4 1392.9,512.5 1392.4,514 1391.9,466 1391.4,417 1390.9,420 1390.4,423.3 1389.9,426.7 1389.4,430.4 1388.9,434.7 1388.4,439 1387.9,444 1387.4,449.3 1386.9,454.8 1386.4,462.5 1385.9,470.2 1385.4,482.2 1384.9,494.9 1384.4,507.4 1383.9,510.2 1383.4,511.6 1382.9,414.7 1382.4,417.3 1381.9,420.4 1381.4,423.7 1380.9,426.9 1380.4,431 1379.9,435.1 1379.4,439.5 1378.9,444.5 1378.4,449.6 1377.9,456.1 1377.4,463.6 1376.9,472.6 1376.4,484.9 1375.9,497 1375.4,505.4 1374.9,506.8 1374.4,470.2 1373.9,416.7 1373.4,418.4 1372.9,421.6 1372.4,424.8 1371.9,428.4 1371.4,432.5 1370.9,436.6 1370.4,441.3 1369.9,446.4 1369.4,451.5 1368.9,458.9 1368.4,466.3 1367.9,477.5 1367.4,489.6 1366.9,501.6 1366.4,505 1365.9,506.4 1365.4,421.6 1364.9,421.5 1364.4,421.4 1363.9,424.7 1363.4,428.1 1362.9,432.2 1362.4,436.5 1361.9,440.9 1361.4,446.2 1360.9,451.4 1360.4,458 1359.9,465.7 1359.4,474.7 1358.9,487.4 1358.4,500 1357.9,509.5 1357.4,511 1356.9,482 1356.4,418.2 1355.9,417 1355.4,420 1354.9,423.1 1354.4,426.5 1353.9,430.4 1353.4,434.4 1352.9,438.9 1352.4,443.7 1351.9,448.5 1351.4,455.6 1350.9,462.7 1350.4,473.1 1349.9,484.8 1349.4,496.3 1348.9,500.3 1348.4,501.6 1347.9,417.3 1347.4,415.3 1346.9,418.3 1346.4,421.3 1345.9,424.4 1345.4,428.1 1344.9,432 1344.4,436 1343.9,440.8 1343.4,445.6 1342.9,451.5 1342.4,458.5 1341.9,466.4 1341.4,478.1 1340.9,489.6 1340.4,499 1339.9,500.3 1339.4,482 1338.9,421 1338.4,419.7 1337.9,421.5 1337.4,424.7 1336.9,428.1 1336.4,432.3 1335.9,436.4 1335.4,441.1 1334.9,446.2 1334.4,451.2 1333.9,458.5 1333.4,465.9 1332.9,476.5 1332.4,488.8 1331.9,500.9 1331.4,505.9 1330.9,507.2 1330.4,418.7 1329.9,419.6 1329.4,419.9 1328.9,420.2 1328.4,423.2 1327.9,426.8 1327.4,430.6 1326.9,434.5 1326.4,439.1 1325.9,443.8 1325.4,449.4 1324.9,456.2 1324.4,463.6 1323.9,475 1323.4,486.2 1322.9,496.1 1322.4,497.4 1321.9,487.5 1321.4,416.4 1320.9,419.1 1320.4,422.5 1319.9,425.9 1319.4,429.4 1318.9,433.7 1318.4,438 1317.9,442.7 1317.4,448 1316.9,453.3 1316.4,460.6 1315.9,468.4 1315.4,479 1314.9,491.7 1314.4,504.3 1313.9,510.2 1313.4,511.7 1312.9,442.1 1312.4,418.7 1311.9,419.5 1311.4,422.7 1310.9,426 1310.4,429.7 1309.9,433.9 1309.4,438 1308.9,443 1308.4,448.1 1307.9,453.9 1307.4,461.4 1306.9,469 1306.4,481.3 1305.9,493.5 1305.4,504.9 1304.9,506.3 1304.4,504.2 1303.9,421.6 1303.4,420.8 1302.9,421.5 1302.4,424 1301.9,427.3 1301.4,431.4 1300.9,435.5 1300.4,440 1299.9,445 1299.4,450.1 1298.9,456.9 1298.4,464.3 1297.9,474.1 1297.4,486.4 1296.9,498.4 1296.4,504.8 1295.9,506.2 1295.4,448.3 1294.9,418.4 1294.4,418 1293.9,421.1 1293.4,424.2 1292.9,427.8 1292.4,431.8 1291.9,435.8 1291.4,440.5 1290.9,445.4 1290.4,450.8 1289.9,458 1289.4,465.1 1288.9,476.8 1288.4,488.5 1287.9,500.1 1287.4,501.6 1286.9,502.9 1286.4,418.9 1285.9,417.5 1285.4,420.7 1284.9,424 1284.4,427.2 1283.9,431.4 1283.4,435.5 1282.9,440 1282.4,445 1281.9,450.1 1281.4,456.9 1280.9,464.3 1280.4,473.8 1279.9,486.1 1279.4,498.2 1278.9,505.5 1278.4,506.9 1277.9,457.3 1277.4,418.8 1276.9,420.1 1276.4,423.2 1275.9,426.6 1275.4,430.3 1274.9,434.6 1274.4,438.9 1273.9,443.9 1273.4,449.1 1272.9,454.7 1272.4,462.4 1271.9,470 1271.4,482.2 1270.9,494.7 1270.4,507.2 1269.9,509.5 1269.4,510.9 1268.9,415.7 1268.4,418.4 1267.9,420 1267.4,423.2 1266.9,426.5 1266.4,430.5 1265.9,434.5 1265.4,438.9 1264.9,443.9 1264.4,448.9 1263.9,455.4 1263.4,462.7 1262.9,471.8 1262.4,483.9 1261.9,495.8 1261.4,503.7 1260.9,505.1 1260.4,464.8 1259.9,416.9 1259.4,416.7 1258.9,419.8 1258.4,422.8 1257.9,426.2 1257.4,430 1256.9,433.9 1256.4,438.4 1255.9,443.2 1255.4,448.1 1254.9,455.1 1254.4,462 1253.9,472.7 1253.4,484.2 1252.9,495.5 1252.4,498.3 1251.9,499.6 1251.4,419.3 1250.9,418.4 1250.4,421.6 1249.9,425 1249.4,428.4 1248.9,432.5 1248.4,436.9 1247.9,441.4 1247.4,446.6 1246.9,451.9 1246.4,458.6 1245.9,466.3 1245.4,475.5 1244.9,488.3 1244.4,501 1243.9,510.1 1243.4,511.6 1242.9,478 1242.4,417.8 1241.9,416.6 1241.4,418.6 1240.9,421.5 1240.4,424.7 1239.9,428.5 1239.4,432.2 1238.9,436.5 1238.4,441.1 1237.9,445.8 1237.4,452.6 1236.9,459.3 1236.4,469.4 1235.9,480.5 1235.4,491.4 1234.9,494.9 1234.4,496.1 1233.9,415.2 1233.4,415.1 1232.9,418 1232.4,421 1231.9,424.1 1231.4,427.8 1230.9,431.6 1230.4,435.6 1229.9,440.4 1229.4,445.1 1228.9,451 1228.4,458 1227.9,465.9 1227.4,477.4 1226.9,488.8 1226.4,497.8 1225.9,499.1 1225.4,477 1224.9,415.4 1224.4,418.2 1223.9,420.9 1223.4,424.1 1222.9,427.5 1222.4,431.5 1221.9,435.6 1221.4,440.2 1220.9,445.1 1220.4,450.1 1219.9,457.3 1219.4,464.6 1218.9,475.1 1218.4,487.2 1217.9,499 1217.4,503.5 1216.9,504.9 1216.4,417.5 1215.9,416.7 1215.4,420.3 1214.9,419.8 1214.4,422.8 1213.9,426.3 1213.4,430.1 1212.9,433.9 1212.4,438.5 1211.9,443.1 1211.4,448.6 1210.9,455.4 1210.4,462.8 1209.9,474 1209.4,485 1208.9,494.4 1208.4,495.7 1207.9,482.1 1207.4,415.7 1206.9,417.9 1206.4,421.1 1205.9,424.4 1205.4,427.7 1204.9,431.9 1204.4,436 1203.9,440.6 1203.4,445.6 1202.9,450.7 1202.4,457.8 1201.9,465.2 1201.4,475.5 1200.9,487.7 1200.4,499.8 1199.9,505.1 1199.4,506.4 1198.9,435.5 1198.4,416.5 1197.9,419.4 1197.4,422.7 1196.9,425.9 1196.4,429.7 1195.9,433.8 1195.4,438 1194.9,443 1194.4,448 1193.9,453.9 1193.4,461.3 1192.9,469.1 1192.4,481.3 1191.9,493.5 1191.4,504.5 1190.9,505.9 1190.4,499.5 1189.9,419.2 1189.4,417.9 1188.9,420.8 1188.4,424 1187.9,427.3 1187.4,431.4 1186.9,435.5 1186.4,440 1185.9,445 1185.4,450.1 1184.9,457 1184.4,464.4 1183.9,474.3 1183.4,486.5 1182.9,498.5 1182.4,504.5 1181.9,505.9 1181.4,443.9 1180.9,418.2 1180.4,421.3 1179.9,424.7 1179.4,428.2 1178.9,432.2 1178.4,436.6 1177.9,441 1177.4,446.2 1176.9,451.6 1176.4,457.7 1175.9,465.6 1175.4,473.5 1174.9,486.5 1174.4,499.5 1173.9,512.1 1173.4,513.5 1172.9,515 1172.4,414.4 1171.9,416.9 1171.4,420.1 1170.9,423.3 1170.4,426.4 1169.9,430.5 1169.4,434.5 1168.9,438.9 1168.4,443.9 1167.9,448.8 1167.4,455.5 1166.9,462.8 1166.4,472.3 1165.9,484.3 1165.4,496.1 1164.9,502.8 1164.4,504.2 1163.9,451.5 1163.4,417.9 1162.9,421 1162.4,424.4 1161.9,427.9 1161.4,431.7 1160.9,436.1 1160.4,440.5 1159.9,445.7 1159.4,451.1 1158.9,457 1158.4,464.9 1157.9,472.7 1157.4,485.4 1156.9,498.3 1156.4,511.1 1155.9,513.1 1155.4,514.6 1154.9,415 1154.4,417.6 1153.9,420.8 1153.4,424 1152.9,427.3 1152.4,431.4 1151.9,435.6 1151.4,440 1150.9,445.1 1150.4,450.2 1149.9,456.9 1149.4,464.4 1148.9,473.8 1148.4,486.1 1147.9,498.3 1147.4,506 1146.9,507.4 1146.4,461.9 1145.9,415.6 1145.4,418.4 1144.9,421.6 1144.4,424.8 1143.9,428.3 1143.4,432.4 1142.9,436.5 1142.4,441.2 1141.9,446.2 1141.4,451.5 1140.9,458.8 1140.4,466.2 1139.9,477.6 1139.4,489.6 1138.9,501.5 1138.4,504.1 1137.9,505.5 1137.4,413.7 1136.9,416.2 1136.4,419.3 1135.9,422.4 1135.4,425.5 1134.9,429.4 1134.4,433.4 1133.9,437.6 1133.4,442.5 1132.9,447.4 1132.4,453.7 1131.9,460.9 1131.4,469.6 1130.9,481.5 1130.4,493.2 1129.9,501.3 1129.4,502.6 1128.9,467.3 1128.4,417.6 1127.9,420.5 1127.4,424 1126.9,427.4 1126.4,431.2 1125.9,435.6 1125.4,439.9 1124.9,445 1124.4,450.4 1123.9,455.9 1123.4,463.8 1122.9,471.7 1122.4,483.6 1121.9,496.6 1121.4,509.4 1120.9,513 1120.4,514.5 1119.9,412.5 1119.4,414.9 1118.9,417.8 1118.4,420.8 1117.9,423.8 1117.4,427.5 1116.9,431.4 1116.4,435.4 1115.9,440.1 1115.4,444.8 1114.9,450.6 1114.4,457.5 1113.9,465.6 1113.4,477 1112.9,488.3 1112.4,496.8 1111.9,498.1 1111.4,472.1 1110.9,415 1110.4,417.7 1109.9,420.9 1109.4,424 1108.9,427.4 1108.4,431.5 1107.9,435.5 1107.4,440.2 1106.9,445.1 1106.4,450.1 1105.9,457.3 1105.4,464.6 1104.9,475.3 1104.4,487.2 1103.9,499 1103.4,503.1 1102.9,504.5 1102.4,412.9 1101.9,415.4 1101.4,418.3 1100.9,421.4 1100.4,424.5 1099.9,428.2 1099.4,432.1 1098.9,436.1 1098.4,440.9 1097.9,445.8 1097.4,451.6 1096.9,458.7 1096.4,466.6 1095.9,478.3 1095.4,489.8 1094.9,499.2 1094.4,500.6 1093.9,482.2 1093.4,415.6 1092.9,418.3 1092.4,421.6 1091.9,424.9 1091.4,428.3 1090.9,432.5 1090.4,436.6 1089.9,441.3 1089.4,446.4 1088.9,451.5 1088.4,458.8 1087.9,466.3 1087.4,476.9 1086.9,489.2 1086.4,501.4 1085.9,506.4 1085.4,507.8 1084.9,412.7 1084.4,415.1 1083.9,418 1083.4,421 1082.9,424.1 1082.4,427.8 1081.9,431.7 1081.4,435.6 1080.9,440.4 1080.4,445.2 1079.9,450.9 1079.4,457.9 1078.9,465.5 1078.4,477.1 1077.9,488.6 1077.4,498.8 1076.9,500.1 1076.4,490 1075.9,414.1 1075.4,416.6 1074.9,419.7 1074.4,422.8 1073.9,426 1073.4,430 1072.9,433.9 1072.4,438.3 1071.9,443.2 1071.4,448 1070.9,454.8 1070.4,461.9 1069.9,471.7 1069.4,483.4 1068.9,495 1068.4,500.4 1067.9,501.7 1067.4,437.8 1066.9,415 1066.4,417.8 1065.9,420.9 1065.4,424 1064.9,427.6 1064.4,431.5 1063.9,435.4 1063.4,440.2 1062.9,445 1062.4,450.5 1061.9,457.6 1061.4,464.8 1060.9,476.5 1060.4,488 1059.9,498.9 1059.4,500.2 1058.9,498.3 1058.4,413.5 1057.9,416 1057.4,419 1056.9,422.1 1056.4,425.2 1055.9,429.1 1055.4,433 1054.9,437.2 1054.4,442 1053.9,446.8 1053.4,453.3 1052.9,460.3 1052.4,469.6 1051.9,481.2 1051.4,492.6 1050.9,498.7 1050.4,500 1049.9,445.1 1049.4,417.6 1048.9,420.7 1048.4,424.1 1047.9,427.5 1047.4,431.4 1046.9,435.7 1046.4,440 1045.9,445.2 1045.4,450.5 1044.9,456.4 1044.4,464.2 1043.9,472 1043.4,484.6 1042.9,497.4 1042.4,510 1041.9,511.6 1041.4,513.1 1040.9,416.4 1040.4,419.1 1039.9,422.5 1039.4,425.9 1038.9,429.4 1038.4,433.7 1037.9,438.1 1037.4,442.8 1036.9,448.1 1036.4,453.4 1035.9,460.6 1035.4,468.4 1034.9,478.4 1034.4,491.4 1033.9,504.1 1033.4,511.8 1032.9,513.2 1032.4,461 1031.9,415.5 1031.4,418.3 1030.9,421.5 1030.4,424.7 1029.9,428.3 1029.4,432.3 1028.9,436.4 1028.4,441.2 1027.9,446.1 1027.4,451.5 1026.9,458.8 1026.4,466.1 1025.9,477.6 1025.4,489.6 1024.9,501.4 1024.4,503.7 1023.9,505 1023.4,416.5 1022.9,419.2 1022.4,422.6 1021.9,426.1 1021.4,429.5 1020.9,433.8 1020.4,438.3 1019.9,442.9 1019.4,448.3 1018.9,453.7 1018.4,460.7 1017.9,468.6 1017.4,478.4 1016.9,491.5 1016.4,504.4 1015.9,512.9 1015.4,514.4 1014.9,470.9 1014.4,416.5 1013.9,418.6 1013.4,421.8 1012.9,425.1 1012.4,428.6 1011.9,432.8 1011.4,436.9 1010.9,441.7 1010.4,446.7 1009.9,452 1009.4,459.4 1008.9,466.8 1008.4,478.2 1007.9,490.4 1007.4,502.4 1006.9,505.4 1006.4,506.8 1005.9,415.8 1005.4,417.6 1004.9,420.8 1004.4,424.1 1003.9,427.4 1003.4,431.5 1002.9,435.7 1002.4,440.1 1001.9,445.2 1001.4,450.4 1000.9,456.9 1000.4,464.4 999.9,473.4 999.4,485.9 998.9,498.2 998.4,507.1 997.9,508.5 997.4,475.8 996.9,417.7 996.4,420.7 995.9,424.2 995.4,427.7 994.9,431.4 994.4,435.9 993.9,440.3 993.4,445.4 992.9,450.8 992.4,456.3 991.9,464.3 991.4,472.2 990.9,484.1 990.4,497.2 989.9,510.1 989.4,514.2 988.9,515.7 988.4,413.1 987.9,414.3 987.4,417.1 986.9,420 986.4,423 985.9,426.5 985.4,430.3 984.9,434.2 984.4,438.8 983.9,443.4 983.4,449.1 982.9,455.8 982.4,463.5 981.9,474.7 981.4,485.7 980.9,494.4 980.4,495.7 979.9,474.2 979.4,414.6 978.9,416.4 978.4,419.1 977.9,422.1 977.4,425.3 976.9,429.2 976.4,433 975.9,437.4 975.4,442.1 974.9,446.8 974.4,453.6 973.9,460.5 973.4,470.5 972.9,481.9 972.4,493.1 971.9,497.3 971.4,498.6 970.9,415.4 970.4,416.7 969.9,419.8 969.4,423 968.9,426.3 968.4,430.1 967.9,434.3 967.4,438.5 966.9,443.5 966.4,448.6 965.9,454.6 965.4,462.1 964.9,470.2 964.4,482.5 963.9,494.6 963.4,504.9 962.9,506.3 962.4,491.4 961.9,415 961.4,417 960.9,420.1 960.4,423.3 959.9,426.5 959.4,430.5 958.9,434.5 958.4,439 957.9,443.9 957.4,448.8 956.9,455.7 956.4,462.9 955.9,472.9 955.4,484.8 954.9,496.5 954.4,501.6 953.9,503 953.4,434.1 952.9,419.3 952.4,420.1 951.9,423.4 951.4,426.7 950.9,430.6 950.4,434.8 949.9,439 949.4,444.2 948.9,449.3 948.4,455.3 947.9,462.9 947.4,470.8 946.9,483.3 946.4,495.7 945.9,507 945.4,508.4 944.9,501.9 944.4,417.2 943.9,420 943.4,423.5 942.9,427 942.4,430.5 941.9,435 941.4,439.4 940.9,444.3 940.4,449.7 939.9,455.2 939.4,462.7 938.9,470.6 938.4,481.4 937.9,494.6 937.4,507.5 936.9,514.1 936.4,515.6 935.9,448.5 935.4,417.7 934.9,420.8 934.4,424.2 933.9,427.6 933.4,431.5 932.9,435.8 932.4,440.2 931.9,445.4 931.4,450.7 930.9,456.7 930.4,464.5 929.9,472.3 929.4,485.1 928.9,497.9 928.4,510.2 927.9,511.7 927.4,513.1 926.9,418.2 926.4,416.8 925.9,420 925.4,421.6 924.9,424.6 924.4,428.5 923.9,432.3 923.4,436.5 922.9,441.2 922.4,445.9 921.9,452.3 921.4,459.2 920.9,468.3 920.4,479.7 919.9,491 919.4,497.4 918.9,498.6 918.4,448.5 917.9,419.1 917.4,420.5 916.9,423.8 916.4,427.2 915.9,431.1 915.4,435.4 914.9,439.7 914.4,444.8 913.9,450.1 913.4,455.9 912.9,463.7 912.4,471.4 911.9,483.9 911.4,496.6 910.9,509.2 910.4,511.2 909.9,512.6 909.4,416.4 908.9,419.2 908.4,422.6 907.9,426 907.4,429.5 906.9,433.8 906.4,438.2 905.9,442.9 905.4,448.2 904.9,453.6 904.4,460.7 903.9,468.5 903.4,478.4 902.9,491.5 902.4,504.3 901.9,512.4 901.4,513.8 900.9,465.9 900.4,419.5 899.9,420.9 899.4,419.8 898.9,422.8 898.4,426.1 897.9,430 897.4,433.9 896.9,438.4 896.4,443.1 895.9,448.1 895.4,455.1 894.9,462 894.4,472.8 893.9,484.2 893.4,495.5 892.9,498 892.4,499.3 891.9,421 891.4,421.4 890.9,418 890.4,421 889.9,424 889.4,427.8 888.9,431.6 888.4,435.7 887.9,440.4 887.4,445.1 886.9,451.1 886.4,458 885.9,466.4 885.4,477.7 884.9,489 884.4,496.8 883.9,498.1 883.4,464.2 882.9,414.9 882.4,416.6 881.9,419.6 881.4,422.7 880.9,426 880.4,429.9 879.9,433.8 879.4,438.2 878.9,443 878.4,447.9 877.9,454.8 877.4,461.8 876.9,472.3 876.4,483.7 875.9,495 875.4,498.2 874.9,499.5 874.4,418.9 873.9,417.9 873.4,421.1 872.9,424.4 872.4,427.8 871.9,431.8 871.4,436.1 870.9,440.5 870.4,445.7 869.9,451 869.4,457.5 868.9,465.1 868.4,474 867.9,486.7 867.4,499.2 866.9,508.6 866.4,510 865.9,481.3 865.4,421.8 864.9,422.3 864.4,423.9 863.9,427.4 863.4,431.1 862.9,435.5 862.4,439.9 861.9,445 861.4,450.4 860.9,455.8 860.4,463.7 859.9,471.6 859.4,483.3 858.9,496.3 858.4,509.2 857.9,513.7 857.4,515.2 856.9,419.7 856.4,416.1 855.9,420.6 855.4,422.2 854.9,425.4 854.4,429.2 853.9,433.2 853.4,437.4 852.9,442.3 852.4,447.2 851.9,453.2 851.4,460.5 850.9,468.6 850.4,480.5 849.9,492.4 849.4,502.1 848.9,503.4 848.4,484.6 847.9,414.7 847.4,417.3 846.9,420.5 846.4,423.7 845.9,427 845.4,431 844.9,435.1 844.4,439.6 843.9,444.5 843.4,449.5 842.9,456.5 842.4,463.8 841.9,474.1 841.4,486 840.9,497.7 840.4,502.6 839.9,503.9 839.4,418.1 838.9,418.7 838.4,422 837.9,425.4 837.4,428.9 836.9,433 836.4,437.5 835.9,441.9 835.4,447.3 834.9,452.7 834.4,459.2 833.9,467.1 833.4,475.7 832.9,488.8 832.4,501.8 831.9,513.3 831.4,514.8 830.9,503.3 830.4,418.1 829.9,419.2 829.4,422.6 828.9,426 828.4,429.5 827.9,433.8 827.4,438.1 826.9,442.9 826.4,448.2 825.9,453.4 825.4,460.8 824.9,468.6 824.4,479.2 823.9,492 823.4,504.6 822.9,510.6 822.4,512 821.9,442.3 821.4,415.7 820.9,418.2 820.4,421.4 819.9,424.5 819.4,428.1 818.9,432.1 818.4,436.1 817.9,440.9 817.4,445.8 816.9,451.4 816.4,458.6 815.9,465.9 815.4,477.7 814.9,489.5 814.4,500.5 813.9,501.8 813.4,499.9 812.9,416.2 812.4,419.5 811.9,422.3 811.4,425.7 810.9,429.1 810.4,433.4 809.9,437.7 809.4,442.4 808.9,447.7 808.4,452.9 807.9,460.1 807.4,467.9 806.9,478.1 806.4,490.9 805.9,503.5 805.4,510.2 804.9,511.7 804.4,451.1 803.9,422.2 803.4,419.2 802.9,421.4 802.4,423.3 801.9,426.8 801.4,430.6 800.9,434.5 800.4,439.2 799.9,443.9 799.4,449.2 798.9,456.2 798.4,463.1 797.9,474.5 797.4,485.9 796.9,497.2 796.4,498.6 795.9,499.9 795.4,417.2 794.9,417.1 794.4,420.3 793.9,423.5 793.4,426.7 792.9,430.8 792.4,434.9 791.9,439.3 791.4,444.3 790.9,449.3 790.4,455.9 789.9,463.3 789.4,472.7 788.9,484.8 788.4,496.8 787.9,503.9 787.4,505.3 786.9,456.4 786.4,417.1 785.9,420 785.4,423.4 784.9,426.7 784.4,430.5 783.9,434.8 783.4,439.1 782.9,444.1 782.4,449.3 781.9,455 781.4,462.7 780.9,470.4 780.4,482.5 779.9,495.2 779.4,507.6 778.9,510 778.4,511.4 777.9,418.1 777.4,418.5 776.9,421.8 776.4,425.1 775.9,428.5 775.4,432.7 774.9,437 774.4,441.6 773.9,446.9 773.4,452.1 772.9,459 772.4,466.7 771.9,476.2 771.4,489 770.9,501.6 770.4,509.9 769.9,511.3 769.4,468.9 768.9,417.6 768.4,420.6 767.9,424.1 767.4,427.5 766.9,431.3 766.4,435.7 765.9,440.1 765.4,445.2 764.9,450.6 764.4,456.2 763.9,464.1 763.4,472 762.9,484.1 762.4,497.1 761.9,509.9 761.4,513.1 760.9,514.6 760.4,415 759.9,417.7 759.4,420.9 758.9,424.2 758.4,427.5 757.9,431.5 757.4,435.7 756.9,440.2 756.4,445.3 755.9,450.5 755.4,457 754.9,464.6 754.4,473.6 753.9,486.1 753.4,498.4 752.9,507.4 752.4,508.8 751.9,476 751.4,415.5 750.9,416.1 750.4,419 749.9,422 749.4,425.3 748.9,429.1 748.4,432.9 747.9,437.3 747.4,441.9 746.9,446.7 746.4,453.5 745.9,460.4 745.4,470.6 744.9,481.9 744.4,493 743.9,496.5 743.4,497.8 742.9,416.1 742.4,418.2 741.9,421.4 741.4,424.8 740.9,428.2 740.4,432.2 739.9,436.6 739.4,441 738.9,446.3 738.4,451.5 737.9,458 737.4,465.8 736.9,474.6 736.4,487.4 735.9,500.1 735.4,510 734.9,511.5 734.4,486.9 733.9,416 733.4,418.8 732.9,422.1 732.4,425.4 731.9,428.9 731.4,433.1 730.9,437.3 730.4,442.1 729.9,447.3 729.4,452.4 728.9,459.9 728.4,467.4 727.9,478.4 727.4,490.8 726.9,503.1 726.4,507.8 725.9,509.2 725.4,413.8 724.9,416.4 724.4,419.4 723.9,422.6 723.4,425.8 722.9,429.6 722.4,433.7 721.9,437.9 721.4,442.9 720.9,447.9 720.4,453.9 719.9,461.2 719.4,469.2 718.9,481.4 718.4,493.4 717.9,503.6 717.4,504.9 716.9,490.1 716.4,416.7 715.9,419.5 715.4,422.9 714.9,426.4 714.4,429.9 713.9,434.2 713.4,438.6 712.9,443.4 712.4,448.7 711.9,454.1 711.4,461.6 710.9,469.4 710.4,480.3 709.9,493.1 709.4,505.8 708.9,511.4 708.4,512.8 707.9,438.1 707.4,418.3 706.9,421.4 706.4,424.9 705.9,428.3 705.4,432.3 704.9,436.7 704.4,441.1 703.9,446.5 703.4,451.8 702.9,458.1 702.4,465.9 701.9,474.2 701.4,487.2 700.9,500.1 700.4,511.8 699.9,513.3 699.4,506.5 698.9,415.5 698.4,418.2 697.9,421.5 697.4,424.8 696.9,428.1 696.4,432.3 695.9,436.5 695.4,441.1 694.9,446.2 694.4,451.4 693.9,458.5 693.4,466 692.9,476.1 692.4,488.6 691.9,500.8 691.4,507 690.9,508.4 690.4,445.1 689.9,414.7 689.4,417.4 688.9,420.5 688.4,423.6 687.9,427.1 687.4,431 686.9,434.9 686.4,439.6 685.9,444.3 685.4,449.7 684.9,456.7 684.4,463.7 683.9,475.3 683.4,486.8 682.9,497.9 682.4,499.2 681.9,500.5 681.4,413.3 680.9,415.8 680.4,418.8 679.9,421.9 679.4,424.9 678.9,428.8 678.4,432.7 677.9,436.9 677.4,441.7 676.9,446.5 676.4,452.9 675.9,459.9 675.4,469 674.9,480.5 674.4,491.9 673.9,498.4 673.4,499.7 672.9,449 672.4,414.6 671.9,417.3 671.4,420.4 670.9,423.5 670.4,427 669.9,430.9 669.4,434.8 668.9,439.4 668.4,444.2 667.9,449.5 667.4,456.5 666.9,463.5 666.4,474.8 665.9,486.4 665.4,497.8 664.9,499.6 664.4,500.9 663.9,413.3 663.4,415.7 662.9,418.7 662.4,421.8 661.9,424.9 661.4,428.7 660.9,432.6 660.4,436.8 659.9,441.6 659.4,446.4 658.9,452.7 658.4,459.7 657.9,468.5 657.4,480.1 656.9,491.5 656.4,498.7 655.9,500 655.4,457.4 654.9,415.1 654.4,417.9 653.9,421 653.4,424.2 652.9,427.6 652.4,431.7 651.9,435.7 651.4,440.4 650.9,445.3 650.4,450.5 649.9,457.7 649.4,464.9 648.9,476.1 648.4,488 647.9,499.7 647.4,502.2 646.9,503.6 646.4,416.5 645.9,419.2 645.4,422.6 644.9,426.1 644.4,429.5 643.9,433.8 643.4,438.3 642.9,442.9 642.4,448.3 641.9,453.7 641.4,460.7 640.9,468.6 640.4,478.2 639.9,491.3 639.4,504.3 638.9,513.3 638.4,514.7 637.9,475.7 637.4,417.9 636.9,420.9 636.4,424.4 635.9,427.9 635.4,431.7 634.9,436.2 634.4,440.6 633.9,445.7 633.4,451.2 632.9,456.8 632.4,464.8 631.9,472.7 631.4,484.8 630.9,498 630.4,510.9 629.9,514.6 629.4,516.1 628.9,416.2 628.4,419 627.9,422.3 627.4,425.7 626.9,429.2 626.4,433.4 625.9,437.8 625.4,442.4 624.9,447.8 624.4,453.2 623.9,459.9 623.4,467.8 622.9,477 622.4,490.1 621.9,503 621.4,512.8 620.9,514.3 620.4,484.6 619.9,415.1 619.4,417.8 618.9,421 618.4,424.2 617.9,427.6 617.4,431.7 616.9,435.8 616.4,440.4 615.9,445.4 615.4,450.4 614.9,457.7 614.4,465 613.9,475.7 613.4,487.7 612.9,499.6 612.4,503.7 611.9,505.1 611.4,416.1 610.9,418.9 610.4,422.1 609.9,425.6 609.4,429.1 608.9,433.2 608.4,437.6 607.9,442.2 607.4,447.6 606.9,453 606.4,459.6 605.9,467.5 605.4,476.4 604.9,489.5 604.4,502.5 603.9,513.1 603.4,514.6 602.9,494 602.4,416.1 601.9,418.9 601.4,422.2 600.9,425.5 600.4,429 599.9,433.3 599.4,437.5 598.9,442.3 598.4,447.5 597.9,452.6 597.4,460.1 596.9,467.7 596.4,478.5 595.9,491.1 595.4,503.4 594.9,508.5 594.4,509.9 593.9,412.8 593.4,415.4 592.9,418.1 592.4,421.2 591.9,424.2 591.4,427.9 590.9,431.8 590.4,435.8 589.9,440.6 589.4,445.4 588.9,451.1 588.4,458.2 587.9,465.7 587.4,477.4 586.9,489 586.4,499.1 585.9,500.5 585.4,490.3 584.9,414 584.4,416.5 583.9,419.6 583.4,422.7 582.9,425.9 582.4,429.9 581.9,433.8 581.4,438.2 580.9,443 580.4,447.9 579.9,454.6 579.4,461.7 578.9,471.5 578.4,483.2 577.9,494.7 577.4,500.2 576.9,501.5 576.4,437.6 575.9,413.9 575.4,416.6 574.9,419.6 574.4,422.5 573.9,426 573.4,429.7 572.9,433.5 572.4,438.1 571.9,442.7 571.4,448 570.9,454.8 570.4,461.7 569.9,472.9 569.4,484 568.9,494.5 568.4,495.7 567.9,493.8 567.4,414.1 566.9,417 566.4,418 565.9,420.9 565.4,423.9 564.9,427.7 564.4,431.5 563.9,435.6 563.4,440.2 562.9,444.8 562.4,451.2 561.9,457.9 561.4,466.9 560.9,478.1 560.4,489.2 559.9,495.1 559.4,496.3 558.9,443.3 558.4,415.3 557.9,418.1 557.4,421.3 556.9,424.4 556.4,428 555.9,432 555.4,436 554.9,440.8 554.4,445.7 553.9,451.2 553.4,458.4 552.9,465.5 552.4,477.3 551.9,489.1 551.4,500.7 550.9,502.2 550.4,503.5 549.9,414.7 549.4,417.3 548.9,420.5 548.4,423.7 547.9,427 547.4,431.1 546.9,435.2 546.4,439.6 545.9,444.7 545.4,449.7 544.9,456.4 544.4,463.8 543.9,473.3 543.4,485.5 542.9,497.5 542.4,504.7 541.9,506.1 541.4,456.8 540.9,416 540.4,417.2 539.9,420.3 539.4,423.4 538.9,426.8 538.4,430.7 537.9,434.6 537.4,439.3 536.9,444 536.4,449.2 535.9,456.3 535.4,463.3 534.9,474.4 534.4,486 533.9,497.4 533.4,499.5 532.9,500.8 532.4,416.1 531.9,418.3 531.4,421.5 530.9,424.9 530.4,428.2 529.9,432.4 529.4,436.7 528.9,441.2 528.4,446.4 527.9,451.7 527.4,458.5 526.9,466.1 526.4,475.6 525.9,488.3 525.4,500.8 524.9,509 524.4,510.5 523.9,468.3 523.4,417.2 522.9,420.2 522.4,423.5 521.9,426.9 521.4,430.7 520.9,435 520.4,439.3 519.9,444.4 519.4,449.7 518.9,455.2 518.4,463 517.9,470.7 517.4,482.7 516.9,495.5 516.4,508.1 515.9,511.3 515.4,512.7 514.9,418.2 514.4,418.7 513.9,421.7 513.4,425 512.9,428.4 512.4,432.6 511.9,436.9 511.4,441.4 510.9,446.7 510.4,452 509.9,458.7 509.4,466.4 508.9,475.6 508.4,488.4 507.9,501.1 507.4,510.2 506.9,511.7 506.4,478.1 505.9,417.2 505.4,420.1 504.9,423.5 504.4,426.9 503.9,430.6 503.4,435 502.9,439.3 502.4,444.3 501.9,449.6 501.4,455 500.9,462.8 500.4,470.7 499.9,482.3 499.4,495.2 498.9,507.8 498.4,511.8 497.9,513.3 497.4,416.3 496.9,419.1 496.4,422.4 495.9,425.9 495.4,429.4 494.9,433.6 494.4,438 493.9,442.6 493.4,448 492.9,453.5 492.4,460.2 491.9,468.1 491.4,477.3 490.9,490.4 490.4,503.5 489.9,513.7 489.4,515.2 488.9,489.9 488.4,416.8 487.9,419.6 487.4,423 486.9,426.4 486.4,430 485.9,434.3 485.4,438.7 484.9,443.6 484.4,448.8 483.9,454.1 483.4,461.8 482.9,469.5 482.4,480.8 481.9,493.5 481.4,506.2 480.9,510.9 480.4,512.4 479.9,420.2 479.4,419.5 478.9,419.7 478.4,421.1 477.9,424.1 477.4,427.8 476.9,431.7 476.4,435.6 475.9,440.4 475.4,445.2 474.9,450.9 474.4,458 473.9,465.7 473.4,477.3 472.9,488.7 472.4,498.5 471.9,499.8 471.4,485.6 470.9,415.3 470.4,416.9 469.9,420 469.4,423.1 468.9,426.4 468.4,430.4 467.9,434.4 467.4,438.8 466.9,443.7 466.4,448.6 465.9,455.5 465.4,462.6 464.9,472.6 464.4,484.4 463.9,496.1 463.4,501.2 462.9,502.5 462.4,434 461.9,417.7 461.4,420.8 460.9,424.2 460.4,427.5 459.9,431.5 459.4,435.8 458.9,440.1 458.4,445.3 457.9,450.6 457.4,456.7 456.9,464.4 456.4,472.5 455.9,485.3 455.4,497.9 454.9,509.4 454.4,510.8 453.9,504.2 453.4,420.7 452.9,420.3 452.4,421 451.9,424.2 451.4,427.5 450.9,431.6 450.4,435.8 449.9,440.3 449.4,445.3 448.9,450.4 448.4,457.4 447.9,464.8 447.4,474.8 446.9,487 446.4,499.1 445.9,505.2 445.4,506.5 444.9,444.2 444.4,420.3 443.9,420.5 443.4,423.9 442.9,427.2 442.4,431.1 441.9,435.4 441.4,439.7 440.9,444.9 440.4,450.1 439.9,456.1 439.4,463.8 438.9,471.5 438.4,484.2 437.9,496.9 437.4,509.2 436.9,510.6 436.4,512 435.9,418.2 435.4,415.6 434.9,418.7 434.4,421.7 433.9,424.7 433.4,428.6 432.9,432.5 432.4,436.7 431.9,441.4 431.4,446.1 430.9,452.5 430.4,459.5 429.9,468.6 429.4,480 428.9,491.4 428.4,497.8 427.9,499.1 427.4,448.7 426.9,417.6 426.4,420.3 425.9,421.2 425.4,424.4 424.9,427.9 424.4,432 423.9,436 423.4,440.7 422.9,445.6 422.4,451 421.9,458.2 421.4,465.4 420.9,477 420.4,488.8 419.9,500.5 419.4,502.4 418.9,503.7 418.4,423.1 417.9,420.6 417.4,419 416.9,422.1 416.4,425.1 415.9,429 415.4,433 414.9,437.2 414.4,442 413.9,446.8 413.4,453.1 412.9,460.2 412.4,469.1 411.9,480.8 411.4,492.3 410.9,499.6 410.4,500.9 409.9,457.9 409.4,417.1 408.9,419.6 408.4,423 407.9,426.3 407.4,430 406.9,434.2 406.4,438.5 405.9,443.4 405.4,448.6 404.9,454.1 404.4,461.8 403.9,469.4 403.4,481.3 402.9,493.8 402.4,506.1 401.9,508.9 401.4,510.3 400.9,416.1 400.4,418.8 399.9,422.1 399.4,425.5 398.9,428.9 398.4,433.2 397.9,437.5 397.4,442.1 396.9,447.4 396.4,452.8 395.9,459.6 395.4,467.4 394.9,476.9 394.4,489.8 393.9,502.6 393.4,511.4 392.9,512.9 392.4,474.4 391.9,422.4 391.4,420.9 390.9,424.4 390.4,427.8 389.9,431.6 389.4,436.1 388.9,440.5 388.4,445.6 387.9,451.1 387.4,456.7 386.9,464.6 386.4,472.6 385.9,484.7 385.4,497.8 384.9,510.7 384.4,514.4 383.9,515.9 383.4,416.5 382.9,416.9 382.4,420 381.9,423.2 381.4,426.5 380.9,430.4 380.4,434.5 379.9,438.8 379.4,443.9 378.9,448.9 378.4,455.2 377.9,462.6 377.4,471.2 376.9,483.5 376.4,495.6 375.9,504.7 375.4,506 374.9,478.3 374.4,417.7 373.9,415.6 373.4,418.6 372.9,421.6 372.4,424.7 371.9,428.5 371.4,432.3 370.9,436.6 370.4,441.2 369.9,445.8 369.4,452.6 368.9,459.4 368.4,469.3 367.9,480.5 367.4,491.5 366.9,495.3 366.4,496.6 365.9,419.9 365.4,418 364.9,419.9 364.4,423.1 363.9,426.3 363.4,430.2 362.9,434.4 362.4,438.6 361.9,443.6 361.4,448.7 360.9,454.8 360.4,462.3 359.9,470.6 359.4,482.8 358.9,495 358.4,504.9 357.9,506.3 357.4,487 356.9,420.7 356.4,417.1 355.9,419.1 355.4,422.1 354.9,425.3 354.4,429.1 353.9,433 353.4,437.3 352.9,442.1 352.4,446.8 351.9,453.5 351.4,460.5 350.9,470.3 350.4,481.7 349.9,493 349.4,497.6 348.9,498.9 348.4,414 347.9,416.5 347.4,419.5 346.9,422.8 346.4,426 345.9,429.8 345.4,434 344.9,438.1 344.4,443.1 343.9,448.2 343.4,454.1 342.9,461.6 342.4,469.5 341.9,481.7 341.4,493.8 340.9,504.5 340.4,505.9 339.9,495.2 339.4,417.2 338.9,420 338.4,423.5 337.9,426.9 337.4,430.5 336.9,434.9 336.4,439.3 335.9,444.2 335.4,449.6 334.9,455 334.4,462.6 333.9,470.5 333.4,481.5 332.9,494.6 332.4,507.4 331.9,513.6 331.4,515 330.9,443.6 330.4,417.7 329.9,420.9 329.4,420.2 328.9,422.5 328.4,425.9 327.9,429.7 327.4,433.5 326.9,438 326.4,442.6 325.9,447.9 325.4,454.7 324.9,461.7 324.4,472.8 323.9,483.9 323.4,494.4 322.9,495.6 322.4,493.8 321.9,413.8 321.4,415.7 320.9,418.7 320.4,421.8 319.9,424.8 319.4,428.7 318.9,432.6 318.4,436.8 317.9,441.5 317.4,446.3 316.9,452.7 316.4,459.7 315.9,468.9 315.4,480.4 314.9,491.7 314.4,497.7 313.9,499 313.4,444.6 312.9,417.6 312.4,420.7 311.9,424.1 311.4,427.5 310.9,431.4 310.4,435.7 309.9,440 309.4,445.2 308.9,450.5 308.4,456.4 307.9,464.2 307.4,472 306.9,484.7 306.4,497.5 305.9,510.1 305.4,511.7 304.9,513.1 304.4,415.7 303.9,417.9 303.4,419.1 302.9,422.2 302.4,425.3 301.9,429.2 301.4,433.1 300.9,437.4 300.4,442.2 299.9,447 299.4,453.4 298.9,460.5 298.4,469.6 297.9,481.3 297.4,492.8 296.9,499.7 296.4,501 295.9,453.9 295.4,415.1 294.9,417.9 294.4,421 293.9,424.1 293.4,427.6 292.9,431.6 292.4,435.6 291.9,440.3 291.4,445.2 290.9,450.5 290.4,457.7 289.9,464.9 289.4,476.2 288.9,488 288.4,499.6 287.9,501.8 287.4,503.2 286.9,412.6 286.4,415 285.9,418 285.4,421 284.9,424 284.4,427.7 283.9,431.5 283.4,435.6 282.9,440.3 282.4,445 281.9,451 281.4,457.9 280.9,466.4 280.4,477.7 279.9,488.9 279.4,496.3 278.9,497.6 278.4,459.9 277.9,417.1 277.4,416.3 276.9,419.3 276.4,422.3 275.9,425.6 275.4,429.4 274.9,433.2 274.4,437.6 273.9,442.3 273.4,447.2 272.9,454 272.4,460.9 271.9,471.4 271.4,482.7 270.9,493.8 270.4,496.6 269.9,497.9 269.4,414.2 268.9,417 268.4,419.9 267.9,423.1 267.4,426.3 266.9,430.2 266.4,434.3 265.9,438.6 265.4,443.6 264.9,448.6 264.4,455 263.9,462.3 263.4,471 262.9,483.2 262.4,495.2 261.9,503.8 261.4,505.2 260.9,473.4 260.4,415.3 259.9,418.1 259.4,421.3 258.9,424.5 258.4,427.9 257.9,432 257.4,436.1 256.9,440.8 256.4,445.8 255.9,450.8 255.4,458.2 254.9,465.5 254.4,476.4 253.9,488.5 253.4,500.4 252.9,504.1 252.4,505.5 251.9,416.4 251.4,419.1 250.9,422.4 250.4,425.9 249.9,429.4 249.4,433.6 248.9,438.1 248.4,442.7 247.9,448.1 247.4,453.6 246.9,460.3 246.4,468.2 245.9,477.4 245.4,490.6 244.9,503.6 244.4,513.9 243.9,515.3 243.4,490 242.9,417 242.4,419.8 241.9,423.2 241.4,426.6 240.9,430.3 240.4,434.6 239.9,439 239.4,443.9 238.9,449.2 238.4,454.5 237.9,462.2 237.4,470 236.9,481.3 236.4,494.2 235.9,506.9 235.4,511.7 234.9,513.1 234.4,412.2 233.9,414.6 233.4,417.4 232.9,420.4 232.4,423.5 231.9,427 231.4,430.9 230.9,434.8 230.4,439.5 229.9,444.2 229.4,449.8 228.9,456.7 228.4,464.3 227.9,475.6 227.4,486.9 226.9,496.5 226.4,497.8 225.9,483.9 225.4,414.5 224.9,417.1 224.4,420.2 223.9,423.4 223.4,426.6 222.9,430.7 222.4,434.7 221.9,439.1 221.4,444 220.9,448.9 220.4,455.9 219.9,463.1 219.4,473.2 218.9,485 218.4,496.7 217.9,501.9 217.4,503.2 216.9,434.2Z" fill="url(#g1)"/>
<line x1="216.9" y1="259.7" x2="216.9" y2="515" stroke="#fff" stroke-width="1"/><line x1="211.9" y1="259.7" x2="216.9" y2="259.7" stroke="#fff" stroke-width="1"/><text x="208.9" y="262.9" text-anchor="end" class="ay">1</text><line x1="211.9" y1="323.5" x2="216.9" y2="323.5" stroke="#fff" stroke-width="1"/><text x="208.9" y="326.7" text-anchor="end" class="ay">0.5</text><line x1="211.9" y1="387.4" x2="216.9" y2="387.4" stroke="#fff" stroke-width="1"/><text x="208.9" y="390.6" text-anchor="end" class="ay">0</text><line x1="211.9" y1="451.2" x2="216.9" y2="451.2" stroke="#fff" stroke-width="1"/><text x="208.9" y="454.4" text-anchor="end" class="ay">-0.5</text><line x1="211.9" y1="515" x2="216.9" y2="515" stroke="#fff" stroke-width="1"/><text x="208.9" y="518.2" text-anchor="end" class="ay">-1</text><text x="216.9" y="530.5" text-anchor="middle" class="ax">1</text><text x="245.3" y="530.5" text-anchor="middle" class="ax">232</text><text x="273.6" y="530.5" text-anchor="middle" class="ax">463</text><text x="302" y="530.5" text-anchor="middle" class="ax">694</text><text x="330.3" y="530.5" text-anchor="middle" class="ax">925</text><text x="358.7" y="530.5" text-anchor="middle" class="ax">1156</text><text x="387" y="530.5" text-anchor="middle" class="ax">1387</text><text x="415.4" y="530.5" text-anchor="middle" class="ax">1618</text><text x="443.7" y="530.5" text-anchor="middle" class="ax">1849</text><text x="472.1" y="530.5" text-anchor="middle" class="ax">2080</text><text x="500.5" y="530.5" text-anchor="middle" class="ax">2311</text><text x="528.8" y="530.5" text-anchor="middle" class="ax">2542</text><text x="557.2" y="530.5" text-anchor="middle" class="ax">2773</text><text x="585.5" y="530.5" text-anchor="middle" class="ax">3004</text><text x="613.9" y="530.5" text-anchor="middle" class="ax">3235</text><text x="642.2" y="530.5" text-anchor="middle" class="ax">3466</text><text x="670.6" y="530.5" text-anchor="middle" class="ax">3697</text><text x="698.9" y="530.5" text-anchor="middle" class="ax">3928</text><text x="727.3" y="530.5" text-anchor="middle" class="ax">4159</text><text x="755.6" y="530.5" text-anchor="middle" class="ax">4390</text><text x="784" y="530.5" text-anchor="middle" class="ax">4621</text><text x="812.4" y="530.5" text-anchor="middle" class="ax">4852</text><text x="840.7" y="530.5" text-anchor="middle" class="ax">5083</text><text x="869.1" y="530.5" text-anchor="middle" class="ax">5314</text><text x="897.4" y="530.5" text-anchor="middle" class="ax">5545</text><text x="925.8" y="530.5" text-anchor="middle" class="ax">5776</text><text x="954.1" y="530.5" text-anchor="middle" class="ax">6007</text><text x="982.5" y="530.5" text-anchor="middle" class="ax">6238</text><text x="1010.8" y="530.5" text-anchor="middle" class="ax">6469</text><text x="1039.2" y="530.5" text-anchor="middle" class="ax">6700</text><text x="1067.6" y="530.5" text-anchor="middle" class="ax">6931</text><text x="1095.9" y="530.5" text-anchor="middle" class="ax">7162</text><text x="1124.3" y="530.5" text-anchor="middle" class="ax">7393</text><text x="1152.6" y="530.5" text-anchor="middle" class="ax">7624</text><text x="1181" y="530.5" text-anchor="middle" class="ax">7855</text><text x="1209.3" y="530.5" text-anchor="middle" class="ax">8086</text><text x="1237.7" y="530.5" text-anchor="middle" class="ax">8317</text><text x="1266" y="530.5" text-anchor="middle" class="ax">8548</text><text x="1294.4" y="530.5" text-anchor="middle" class="ax">8779</text><text x="1322.8" y="530.5" text-anchor="middle" class="ax">9010</text><text x="1351.1" y="530.5" text-anchor="middle" class="ax">9241</text><text x="1379.5" y="530.5" text-anchor="middle" class="ax">9472</text><text x="1407.8" y="530.5" text-anchor="middle" class="ax">9703</text><text x="1436.2" y="530.5" text-anchor="middle" class="ax">9934</text><text x="828" y="544.5" text-anchor="middle" class="axn">点数</text><text transform="translate(175.5,379) rotate(-90)" text-anchor="middle" class="axn">幅值</text>
<g transform="translate(1487,253) scale(.85)" fill="none" stroke="#4d6996" stroke-width="1.3"><path d="M0 -6v9M-4 -1l4 4 4-4M-6 6h12"/></g>
<text x="279.2" y="985.6" text-anchor="end" class="ay">0</text><line x1="287.2" y1="930.2" x2="1362.9" y2="930.2" stroke="#fff" stroke-opacity="0.4" stroke-width="1.2"/><text x="279.2" y="933.4" text-anchor="end" class="ay">0.3</text><line x1="287.2" y1="878" x2="1362.9" y2="878" stroke="#fff" stroke-opacity="0.5" stroke-width="1.2"/><text x="279.2" y="881.2" text-anchor="end" class="ay">0.6</text><line x1="287.2" y1="825.8" x2="1362.9" y2="825.8" stroke="#fff" stroke-opacity="0.95" stroke-width="1.2"/><text x="279.2" y="829" text-anchor="end" class="ay">0.9</text><line x1="287.2" y1="773.6" x2="1362.9" y2="773.6" stroke="#fff" stroke-opacity="0.5" stroke-width="1.2"/><text x="279.2" y="776.8" text-anchor="end" class="ay">1.2</text><line x1="287.2" y1="721.4" x2="1362.9" y2="721.4" stroke="#fff" stroke-opacity="0.4" stroke-width="1"/><text x="279.2" y="724.6" text-anchor="end" class="ay">1.5</text><line x1="287.2" y1="982.4" x2="1362.9" y2="982.4" stroke="#fff" stroke-width="1"/><line x1="287.2" y1="982.4" x2="287.2" y2="986.4" stroke="#fff" stroke-width="1"/><text x="287.2" y="998.4" text-anchor="middle" class="ax">1</text><line x1="315.5" y1="982.4" x2="315.5" y2="986.4" stroke="#fff" stroke-width="1"/><text x="315.5" y="998.4" text-anchor="middle" class="ax">264</text><line x1="343.8" y1="982.4" x2="343.8" y2="986.4" stroke="#fff" stroke-width="1"/><text x="343.8" y="998.4" text-anchor="middle" class="ax">527</text><line x1="372.1" y1="982.4" x2="372.1" y2="986.4" stroke="#fff" stroke-width="1"/><text x="372.1" y="998.4" text-anchor="middle" class="ax">790</text><line x1="400.4" y1="982.4" x2="400.4" y2="986.4" stroke="#fff" stroke-width="1"/><text x="400.4" y="998.4" text-anchor="middle" class="ax">1053</text><line x1="428.7" y1="982.4" x2="428.7" y2="986.4" stroke="#fff" stroke-width="1"/><text x="428.7" y="998.4" text-anchor="middle" class="ax">1316</text><line x1="457" y1="982.4" x2="457" y2="986.4" stroke="#fff" stroke-width="1"/><text x="457" y="998.4" text-anchor="middle" class="ax">1579</text><line x1="485.4" y1="982.4" x2="485.4" y2="986.4" stroke="#fff" stroke-width="1"/><text x="485.4" y="998.4" text-anchor="middle" class="ax">1842</text><line x1="513.7" y1="982.4" x2="513.7" y2="986.4" stroke="#fff" stroke-width="1"/><text x="513.7" y="998.4" text-anchor="middle" class="ax">2105</text><line x1="542" y1="982.4" x2="542" y2="986.4" stroke="#fff" stroke-width="1"/><text x="542" y="998.4" text-anchor="middle" class="ax">2368</text><line x1="570.3" y1="982.4" x2="570.3" y2="986.4" stroke="#fff" stroke-width="1"/><text x="570.3" y="998.4" text-anchor="middle" class="ax">2631</text><line x1="598.6" y1="982.4" x2="598.6" y2="986.4" stroke="#fff" stroke-width="1"/><text x="598.6" y="998.4" text-anchor="middle" class="ax">2894</text><line x1="626.9" y1="982.4" x2="626.9" y2="986.4" stroke="#fff" stroke-width="1"/><text x="626.9" y="998.4" text-anchor="middle" class="ax">3157</text><line x1="655.2" y1="982.4" x2="655.2" y2="986.4" stroke="#fff" stroke-width="1"/><text x="655.2" y="998.4" text-anchor="middle" class="ax">3420</text><line x1="683.5" y1="982.4" x2="683.5" y2="986.4" stroke="#fff" stroke-width="1"/><text x="683.5" y="998.4" text-anchor="middle" class="ax">3683</text><line x1="711.8" y1="982.4" x2="711.8" y2="986.4" stroke="#fff" stroke-width="1"/><text x="711.8" y="998.4" text-anchor="middle" class="ax">3946</text><line x1="740.1" y1="982.4" x2="740.1" y2="986.4" stroke="#fff" stroke-width="1"/><text x="740.1" y="998.4" text-anchor="middle" class="ax">4209</text><line x1="768.4" y1="982.4" x2="768.4" y2="986.4" stroke="#fff" stroke-width="1"/><text x="768.4" y="998.4" text-anchor="middle" class="ax">4472</text><line x1="796.7" y1="982.4" x2="796.7" y2="986.4" stroke="#fff" stroke-width="1"/><text x="796.7" y="998.4" text-anchor="middle" class="ax">4735</text><line x1="825" y1="982.4" x2="825" y2="986.4" stroke="#fff" stroke-width="1"/><text x="825" y="998.4" text-anchor="middle" class="ax">4998</text><line x1="853.4" y1="982.4" x2="853.4" y2="986.4" stroke="#fff" stroke-width="1"/><text x="853.4" y="998.4" text-anchor="middle" class="ax">5261</text><line x1="881.7" y1="982.4" x2="881.7" y2="986.4" stroke="#fff" stroke-width="1"/><text x="881.7" y="998.4" text-anchor="middle" class="ax">5524</text><line x1="910" y1="982.4" x2="910" y2="986.4" stroke="#fff" stroke-width="1"/><text x="910" y="998.4" text-anchor="middle" class="ax">5787</text><line x1="938.3" y1="982.4" x2="938.3" y2="986.4" stroke="#fff" stroke-width="1"/><text x="938.3" y="998.4" text-anchor="middle" class="ax">6050</text><line x1="966.6" y1="982.4" x2="966.6" y2="986.4" stroke="#fff" stroke-width="1"/><text x="966.6" y="998.4" text-anchor="middle" class="ax">6313</text><line x1="994.9" y1="982.4" x2="994.9" y2="986.4" stroke="#fff" stroke-width="1"/><text x="994.9" y="998.4" text-anchor="middle" class="ax">6576</text><line x1="1023.2" y1="982.4" x2="1023.2" y2="986.4" stroke="#fff" stroke-width="1"/><text x="1023.2" y="998.4" text-anchor="middle" class="ax">6839</text><line x1="1051.5" y1="982.4" x2="1051.5" y2="986.4" stroke="#fff" stroke-width="1"/><text x="1051.5" y="998.4" text-anchor="middle" class="ax">7102</text><line x1="1079.8" y1="982.4" x2="1079.8" y2="986.4" stroke="#fff" stroke-width="1"/><text x="1079.8" y="998.4" text-anchor="middle" class="ax">7365</text><line x1="1108.1" y1="982.4" x2="1108.1" y2="986.4" stroke="#fff" stroke-width="1"/><text x="1108.1" y="998.4" text-anchor="middle" class="ax">7628</text><line x1="1136.4" y1="982.4" x2="1136.4" y2="986.4" stroke="#fff" stroke-width="1"/><text x="1136.4" y="998.4" text-anchor="middle" class="ax">7891</text><line x1="1164.7" y1="982.4" x2="1164.7" y2="986.4" stroke="#fff" stroke-width="1"/><text x="1164.7" y="998.4" text-anchor="middle" class="ax">8154</text><line x1="1193.1" y1="982.4" x2="1193.1" y2="986.4" stroke="#fff" stroke-width="1"/><text x="1193.1" y="998.4" text-anchor="middle" class="ax">8417</text><line x1="1221.4" y1="982.4" x2="1221.4" y2="986.4" stroke="#fff" stroke-width="1"/><text x="1221.4" y="998.4" text-anchor="middle" class="ax">8680</text><line x1="1249.7" y1="982.4" x2="1249.7" y2="986.4" stroke="#fff" stroke-width="1"/><text x="1249.7" y="998.4" text-anchor="middle" class="ax">8943</text><line x1="1278" y1="982.4" x2="1278" y2="986.4" stroke="#fff" stroke-width="1"/><text x="1278" y="998.4" text-anchor="middle" class="ax">9206</text><line x1="1306.3" y1="982.4" x2="1306.3" y2="986.4" stroke="#fff" stroke-width="1"/><text x="1306.3" y="998.4" text-anchor="middle" class="ax">9469</text><line x1="1334.6" y1="982.4" x2="1334.6" y2="986.4" stroke="#fff" stroke-width="1"/><text x="1334.6" y="998.4" text-anchor="middle" class="ax">9732</text><line x1="1362.9" y1="982.4" x2="1362.9" y2="986.4" stroke="#fff" stroke-width="1"/><text x="1362.9" y="998.4" text-anchor="middle" class="ax">9995</text>
<path d="M287.2,885.4 287.7,743.2 288.2,746.5 288.7,755.1 289.2,764.8 289.7,778.8 290.2,801.8 290.7,824.4 291.2,846.2 291.7,866.3 292.2,882.8 292.7,899.2 293.2,910.8 293.7,921.3 294.2,931.8 294.7,938.5 295.2,763.8 295.7,767.6 296.2,777.9 296.7,788.9 297.2,813.4 297.7,839.2 298.2,864 298.7,884.6 299.2,903.4 299.7,917.5 300.2,929.5 300.7,940 301.2,941.3 301.7,950.2 302.2,943.5 302.7,831.6 303.2,759.9 303.7,768.1 304.2,779.6 304.7,800.4 305.2,827.7 305.7,853.7 306.2,877 306.7,896.6 307.2,913 307.7,925.4 308.2,937.5 308.7,944.4 309.2,938.9 309.7,944.6 310.2,949.2 310.7,766 311.2,769 311.7,776.5 312.2,785.3 312.7,797.6 313.2,818.6 313.7,839.4 314.2,859.3 314.7,877.7 315.2,892.7 315.7,907.8 316.2,918.2 316.7,927.8 317.2,937.4 317.7,943.2 318.2,764.7 318.7,752.4 319.2,760.6 319.7,771.4 320.2,788.9 320.7,814.5 321.2,839.2 321.7,863.5 322.2,882.1 322.7,900.4 323.2,913.6 323.7,925.3 324.2,936.2 324.7,942.7 325.2,949.2 325.7,847.2 326.2,746.7 326.7,752.3 327.2,763.3 327.7,775.3 328.2,801.3 328.7,826.9 329.2,851.5 329.7,872.8 330.2,891.4 330.7,907.5 331.2,919.4 331.7,931.3 332.2,939.2 332.7,945.8 333.2,948.8 333.7,756.6 334.2,759.9 334.7,767.7 335.2,777.3 335.7,791.1 336.2,813.8 336.7,835.9 337.2,857.4 337.7,876.3 338.2,892.5 338.7,908.1 339.2,918.4 339.7,928.8 340.2,938 340.7,943.8 341.2,784.9 341.7,747.6 342.2,751.3 342.7,760.3 343.2,769.2 343.7,783.6 344.2,804.9 344.7,825.8 345.2,846 345.7,865.3 346.2,880.5 346.7,895.8 347.2,908.2 347.7,918 348.2,927.7 348.7,876.5 349.2,756.9 349.7,760.3 350.2,769.8 350.7,779.3 351.2,796.8 351.7,819.5 352.2,841.5 352.7,863 353.2,880.5 353.7,896.8 354.2,910.8 354.7,921.2 355.2,931.5 355.7,939.5 356.2,945.3 356.7,745.3 357.2,749.2 357.7,759.2 358.2,770.4 358.7,792.2 359.2,818.8 359.7,844 360.2,867.6 360.7,886.6 361.2,904.8 361.7,916.9 362.2,929 362.7,938.1 363.2,944.9 363.7,948.8 364.2,818.5 364.7,761 365.2,767.6 365.7,778.1 366.2,792.4 366.7,817.1 367.2,841.1 367.7,864.5 368.2,883.4 368.7,901.1 369.2,914.8 369.7,926 370.2,937.3 370.7,943.5 371.2,949.7 371.7,950.7 372.2,737.9 372.7,741.9 373.2,753 373.7,764.1 374.2,787 374.7,813.3 375.2,838.2 375.7,861.9 376.2,880.8 376.7,899.6 377.2,911.9 377.7,923.9 378.2,934.5 378.7,941.2 379.2,947.7 379.7,754.3 380.2,756.1 380.7,761.3 381.2,770.3 381.7,779.2 382.2,797.7 382.7,819 383.2,839.5 383.7,859.6 384.2,876.6 384.7,891.8 385.2,906.7 385.7,916.4 386.2,926.1 386.7,935.8 387.2,846.4 387.7,768.5 388.2,771.9 388.7,780.6 389.2,789.3 389.7,805 390.2,825.7 390.7,845.8 391.2,865.4 391.7,882.3 392.2,897.1 392.7,911.4 393.2,920.9 393.7,930.3 394.2,939.4 394.7,944.6 395.2,764.8 395.7,767.9 396.2,775.8 396.7,784.9 397.2,798.8 397.7,820.6 398.2,841.8 398.7,862.5 399.2,880.4 399.7,896 400.2,910.9 400.7,920.8 401.2,930.8 401.7,939.6 402.2,945.1 402.7,769.5 403.2,747.5 403.7,754.4 404.2,764.8 404.7,777.6 405.2,802.3 405.7,826.5 406.2,849.9 406.7,870.5 407.2,888.2 407.7,904.8 408.2,916.1 408.7,927.3 409.2,936.7 409.7,942.9 410.2,854.1 410.7,741.9 411.2,746 411.7,756.4 412.2,766.7 412.7,787.4 413.2,812 413.7,835.6 414.2,858.9 414.7,876.8 415.2,894.4 415.7,908.3 416.2,919.5 416.7,930.8 417.2,938.2 417.7,944.4 418.2,748.1 418.7,752.6 419.2,764.6 419.7,777.8 420.2,806.3 420.7,834.1 421.2,861.1 421.7,882.1 422.2,902.6 422.7,916.1 423.2,929.1 423.7,938.7 424.2,946.1 424.7,944.2 425.2,948.4 425.7,807.3 426.2,764.2 426.7,768 427.2,776.6 427.7,785.2 428.2,800.4 428.7,820.8 429.2,840.7 429.7,860 430.2,877.3 430.7,891.9 431.2,906.5 431.7,916.8 432.2,926.1 432.7,935.4 433.2,878.6 433.7,742.1 434.2,749.4 434.7,762.1 435.2,782.2 435.7,812.4 436.2,841.1 436.7,867.3 437.2,888.9 437.7,907.3 438.2,921 438.7,934.2 439.2,941.8 439.7,948.1 440.2,948.1 440.7,948.1 441.2,744.7 441.7,748 442.2,754.7 442.7,764.4 443.2,774.8 443.7,797.9 444.2,820.9 444.7,842.8 445.2,864.1 445.7,880.7 446.2,897.2 446.7,909.9 447.2,920.4 447.7,931 448.2,938.3 448.7,830.6 449.2,766.2 449.7,774 450.2,785 450.7,804.4 451.2,830.6 451.7,855.5 452.2,878.2 452.7,897 453.2,913.4 453.7,925.4 454.2,937.3 454.7,944.1 455.2,950.9 455.7,937.3 456.2,948.5 456.7,756 457.2,759.2 457.7,767.2 458.2,776.5 458.7,789.9 459.2,812 459.7,833.7 460.2,854.7 460.7,873.7 461.2,889.5 461.7,905.3 462.2,915.9 462.7,926 463.2,929.2 463.7,939.1 464.2,756.4 464.7,749.8 465.2,758.3 465.7,769.2 466.2,787.3 466.7,813.3 467.2,838.2 467.7,862.8 468.2,881.4 468.7,900 469.2,913.2 469.7,925 470.2,933.5 470.7,942.4 471.2,937.5 471.7,854.7 472.2,768.6 472.7,772.7 473.2,782 473.7,791.3 474.2,810.8 474.7,832.9 475.2,853.8 475.7,874.4 476.2,890.2 476.7,905.9 477.2,917.7 477.7,927.7 478.2,937.7 478.7,943.8 479.2,949.4 479.7,765.9 480.2,768.7 480.7,774.3 481.2,782.5 481.7,790.7 482.2,808.3 482.7,827.8 483.2,846.5 483.7,865 484.2,880.9 484.7,894.8 485.2,908.7 485.7,918.1 486.2,927 486.7,935.9 487.2,788.6 487.7,759.5 488.2,768.3 488.7,779.5 489.2,800.6 489.7,827.2 490.2,852.4 490.7,875.2 491.2,894.3 491.7,911 492.2,923.1 492.7,935.3 493.2,942.6 493.7,945.8 494.2,949.7 494.7,863.3 495.2,742 495.7,748.8 496.2,760.8 496.7,777.7 497.2,806.3 497.7,833.9 498.2,860.7 498.7,881.2 499.2,901.7 499.7,914.7 500.2,927.7 500.7,935.3 501.2,944.7 501.7,940.1 502.2,944.9 502.7,736.2 503.2,739.8 503.7,747.3 504.2,757.5 504.7,770 505.2,794.2 505.7,818.1 506.2,841 506.7,862.5 507.2,879.8 507.7,897.1 508.2,909.3 508.7,920.4 509.2,931.4 509.7,938.1 510.2,812.2 510.7,760.1 511.2,768.1 511.7,779.2 512.2,798.1 512.7,824.4 513.2,849.5 513.7,873 514.2,891.8 514.7,909.4 515.2,921.4 515.7,933.4 516.2,941.6 516.7,948.2 517.2,950.6 517.7,950.6 518.2,740.1 518.7,744.1 519.2,754.9 519.7,765.8 520.2,788 520.7,813.7 521.2,838.3 521.7,861.9 522.2,880.3 522.7,898.8 523.2,911.5 523.7,923.2 524.2,934.2 524.7,940.7 525.2,947.2 525.7,743 526.2,747.3 526.7,759.4 527.2,772.3 527.7,802.2 528.2,831.2 528.7,859.5 529.2,881.3 529.7,902.6 530.2,916.2 530.7,929.8 531.2,939.2 531.7,946.7 532.2,948.5 532.7,948.5 533.2,823.6 533.7,741.8 534.2,745 534.7,753.9 535.2,763.1 535.7,776.2 536.2,798.1 536.7,819.8 537.2,840.5 537.7,861 538.2,876.7 538.7,892.3 539.2,905.7 539.7,915.7 540.2,925.7 540.7,934.7 541.2,749.6 541.7,753 542.2,762.1 542.7,772.2 543.2,789.3 543.7,813.2 544.2,836.3 544.7,858.9 545.2,877.4 545.7,894.5 546.2,909 546.7,919.9 547.2,930.8 547.7,938.8 548.2,944.9 548.7,756.7 549.2,739.8 549.7,745.7 550.2,755.7 550.7,765.7 551.2,787.9 551.7,811.6 552.2,834.2 552.7,856.7 553.2,874.1 553.7,891.1 554.2,905.4 554.7,916.2 555.2,927.1 555.7,935.6 556.2,852 556.7,749.1 557.2,755 557.7,766 558.2,778.9 558.7,805 559.2,830.7 559.7,855.5 560.2,876.2 560.7,894.9 561.2,910.1 561.7,922.1 562.2,934 562.7,941 563.2,947.6 563.7,949.1 564.2,738.5 564.7,742.7 565.2,754.7 565.7,766.7 566.2,794.5 566.7,822.6 567.2,849.7 567.7,872.4 568.2,892.8 568.7,908.8 569.2,921.8 569.7,934 570.2,941.2 570.7,947.8 571.2,947.8 571.7,791.9 572.2,752.9 572.7,762.1 573.2,773.7 573.7,796 574.2,823.7 574.7,849.9 575.2,873.4 575.7,893.3 576.2,910.1 576.7,922.8 577.2,935.4 577.7,942.4 578.2,949.4 578.7,949.5 579.2,882.2 579.7,762.4 580.2,766.8 580.7,776.9 581.2,787 581.7,809.9 582.2,833.7 582.7,856.5 583.2,877.1 583.7,894.3 584.2,910.4 584.7,921.4 585.2,932.3 585.7,940.8 586.2,946.8 586.7,951.1 587.2,751 587.7,754.5 588.2,762.2 588.7,772.2 589.2,786.5 589.7,810.3 590.2,833.4 590.7,855.9 591.2,875.3 591.7,892.3 592.2,907.8 592.7,918.6 593.2,929.5 593.7,938.2 594.2,944.2 594.7,817.1 595.2,755 595.7,763 596.2,774.4 596.7,793.7 597.2,820.8 597.7,846.6 598.2,870.8 598.7,890.2 599.2,908.1 599.7,920.5 600.2,932.8 600.7,941 601.2,947.9 601.7,949.8 602.2,949.8 602.7,757.2 603.2,760.2 603.7,767.3 604.2,776 604.7,785.9 605.2,806.8 605.7,827.6 606.2,847.3 606.7,867.1 607.2,882.3 607.7,897.2 608.2,910.3 608.7,919.8 609.2,929.3 609.7,937.9 610.2,759.6 610.7,758.3 611.2,764.3 611.7,773.7 612.2,783.2 612.7,805.4 613.2,827.5 613.7,848.6 614.2,869.2 614.7,885.1 615.2,901 615.7,913.2 616.2,923.4 616.7,933.5 617.2,940.5 617.7,839.8 618.2,753.6 618.7,760.6 619.2,771.9 619.7,788.6 620.2,815.4 620.7,841.2 621.2,866.3 621.7,885.5 622.2,904.7 622.7,917.1 623.2,929.4 623.7,939 624.2,943.1 624.7,947.6 625.2,949.7 625.7,749.5 626.2,753 626.7,762.4 627.2,772.6 627.7,790.8 628.2,815.2 628.7,838.7 629.2,861.8 629.7,880 630.2,897.4 630.7,911.1 631.2,922.3 631.7,933.4 632.2,940.4 632.7,946.5 633.2,786.9 633.7,763.9 634.2,774.1 634.7,785.8 635.2,811.6 635.7,838.8 636.2,865.1 636.7,886.1 637.2,906 637.7,919.5 638.2,932.1 638.7,941.5 639.2,948.5 639.7,951 640.2,948.6 640.7,866.9 641.2,759.5 641.7,762.5 642.2,770.3 642.7,779 643.2,790.4 643.7,810.9 644.2,831.3 644.7,850.8 645.2,870 645.7,884.7 646.2,899.5 646.7,911.8 647.2,921.2 647.7,930.6 648.2,938.7 648.7,751.8 649.2,755.3 649.7,764 650.2,774.3 650.7,791.4 651.2,815.7 651.7,839.2 652.2,862.2 652.7,880.5 653.2,897.9 653.7,911.7 654.2,922.8 654.7,931.5 655.2,930.5 655.7,935.9 656.2,802.1 656.7,753.6 657.2,758.1 657.7,767.5 658.2,776.8 658.7,795.5 659.2,817.7 659.7,839.1 660.2,860.1 660.7,877.4 661.2,893.3 661.7,907.8 662.2,918 662.7,928.1 663.2,937.1 663.7,887.9 664.2,754.8 664.7,757.7 665.2,764.3 665.7,772.8 666.2,781.4 666.7,801 667.2,821.2 667.7,840.6 668.2,859.8 668.7,876 669.2,890.5 669.7,905 670.2,914.7 670.7,923.9 671.2,933.1 671.7,746.1 672.2,749.3 672.7,754.7 673.2,763.8 673.7,773 674.2,791.7 674.7,813.4 675.2,834.3 675.7,854.8 676.2,872.4 676.7,887.9 677.2,903.4 677.7,913.4 678.2,923.3 678.7,933.2 679.2,832.1 679.7,762.9 680.2,765.9 680.7,774.4 681.2,783 681.7,796.2 682.2,816.5 682.7,836.4 683.2,855.6 683.7,873.9 684.2,888.4 684.7,902.9 685.2,914.3 685.7,923.5 686.2,932.8 686.7,940.1 687.2,751.4 687.7,754.8 688.2,763.9 688.7,773.9 689.2,790.8 689.7,814.4 690.2,837.3 690.7,859.7 691.2,878 691.7,894.9 692.2,909.4 692.7,920.1 693.2,930.9 693.7,933.5 694.2,934.7 694.7,771.2 695.2,761.5 695.7,768.4 696.2,778.2 696.7,791.4 697.2,814.7 697.7,837.5 698.2,859.6 698.7,878.7 699.2,895.4 699.7,910.5 700.2,921.2 700.7,931.8 701.2,939.1 701.7,946 702.2,844 702.7,745.2 703.2,750.5 703.7,761.3 704.2,772.1 704.7,797.5 705.2,822.8 705.7,847 706.2,868.9 706.7,887.2 707.2,904.5 707.7,916.2 708.2,927.8 708.7,937.1 709.2,943.5 709.7,948.6 710.2,745.6 710.7,749 711.2,757 711.7,766.9 712.2,780.7 712.7,804.1 713.2,827.2 713.7,849.4 714.2,869.5 714.7,886.3 715.2,903.1 715.7,913.9 716.2,924.6 716.7,934.9 717.2,940.9 717.7,780.6 718.2,746.2 718.7,754.8 719.2,766.3 719.7,785.9 720.2,813.2 720.7,839.3 721.2,864.3 721.7,883.8 722.2,903.1 722.7,915.6 723.2,928 723.7,937.6 724.2,944.5 724.7,945.6 725.2,872 725.7,752.6 726.2,757.1 726.7,767.6 727.2,778 727.7,801.4 728.2,826 728.7,849.5 729.2,871.2 729.7,889 730.2,906.2 730.7,917.5 731.2,928.9 731.7,938.2 732.2,938.6 732.7,949.7 733.2,760 733.7,764.2 734.2,775.9 734.7,789.2 735.2,816.9 735.7,843.8 736.2,870 736.7,889.8 737.2,909.1 737.7,921.7 738.2,934.3 738.7,942.7 739.2,949.7 739.7,946.2 740.2,949.2 740.7,801.2 741.2,740.4 741.7,744.7 742.2,754.4 742.7,764.1 743.2,782 743.7,805 744.2,827.4 744.7,849.3 745.2,868.2 745.7,884.8 746.2,901.2 746.7,911.7 747.2,922.3 747.7,932.8 748.2,938.8 748.7,752.4 749.2,756.2 749.7,766.6 750.2,777.1 750.7,798.8 751.2,823.5 751.7,847 752.2,869.3 752.7,887 753.2,904.7 753.7,916.2 754.2,927.5 754.7,937.4 755.2,943.7 755.7,949.7 756.2,755.3 756.7,758.8 757.2,766.7 757.7,776.8 758.2,792.6 758.7,816.7 759.2,840.1 759.7,863 760.2,881.5 760.7,898.8 761.2,912.7 761.7,923.7 762.2,934.7 762.7,941.6 763.2,947.7 763.7,838.5 764.2,759.9 764.7,764.5 765.2,774.2 765.7,783.8 766.2,804.6 766.7,827.5 767.2,849.3 767.7,870.5 768.2,886.9 768.7,903.2 769.2,915.3 769.7,925.7 770.2,936.1 770.7,942.3 771.2,948.1 771.7,755.8 772.2,760.8 772.7,772.3 773.2,785.9 773.7,813.1 774.2,839.7 774.7,865.5 775.2,885.5 775.7,905.1 776.2,918 776.7,930.5 777.2,940 777.7,946.9 778.2,949.5 778.7,950.2 779.2,767.5 779.7,747.7 780.2,753.2 780.7,762.8 781.2,772.4 781.7,793.1 782.2,815.9 782.7,837.7 783.2,859.3 783.7,876.4 784.2,892.7 784.7,907 785.2,917.4 785.7,927.8 786.2,936.5 786.7,852.5 787.2,744.1 787.7,751.6 788.2,763.8 788.7,783 789.2,812 789.7,839.7 790.2,865.6 790.7,886.4 791.2,905.3 791.7,918.5 792.2,931.8 792.7,940 793.2,947.3 793.7,948.4 794.2,948.4 794.7,752.4 795.2,755.8 795.7,763.9 796.2,773.7 796.7,788.4 797.2,811.7 797.7,834.5 798.2,856.7 798.7,875.7 799.2,892.4 799.7,907.9 800.2,918.5 800.7,929.2 801.2,938.1 801.7,944 802.2,790.9 802.7,746.9 803.2,752.6 803.7,762.7 804.2,772.8 804.7,796.1 805.2,820 805.7,842.7 806.2,864.6 806.7,881.8 807.2,898.9 807.7,911.4 808.2,922.3 808.7,933.2 809.2,939.8 809.7,885.1 810.2,761.9 810.7,766.6 811.2,777 811.7,787.3 812.2,811.8 812.7,836.1 813.2,859.4 813.7,879.7 814.2,897.3 814.7,912.6 815.2,923.8 815.7,935 816.2,942.4 816.7,948.4 817.2,946 817.7,753.2 818.2,756.8 818.7,765.7 819.2,776.2 819.7,794.8 820.2,819.8 820.7,843.7 821.2,867.2 821.7,885.1 822.2,903 822.7,915.5 823.2,926.9 823.7,937.3 824.2,943.6 824.7,949.9 825.2,823 825.7,757.9 826.2,762.4 826.7,771.8 827.2,781.2 827.7,800.6 828.2,823 828.7,844.4 829.2,865.6 829.7,882.2 830.2,898.2 830.7,911.6 831.2,921.8 831.7,932 832.2,939.7 832.7,945.4 833.2,758.1 833.7,761.1 834.2,767.8 834.7,776.5 835.2,785.7 835.7,806.2 836.2,826.8 836.7,846.4 837.2,865.9 837.7,881.3 838.2,896.1 838.7,909.6 839.2,919 839.7,928.4 840.2,937.4 840.7,763.7 841.2,760 841.7,770.8 842.2,782.6 842.7,809.4 843.2,836.8 843.7,863.2 844.2,884.4 844.7,904.4 845.2,918 845.7,930.7 846.2,940.4 846.7,946.8 847.2,948.2 847.7,936.5 848.2,838.5 848.7,745.5 849.2,750.1 849.7,760.4 850.2,770.6 850.7,792.2 851.2,816.5 851.7,839.7 852.2,862.5 852.7,879.9 853.2,897.3 853.7,910.4 854.2,921.5 854.7,932.6 855.2,939.5 855.7,945.6 856.2,744.6 856.7,747.8 857.2,754.6 857.7,763.9 858.2,773.2 858.7,795.2 859.2,817.2 859.7,838.2 860.2,859.1 860.7,875.6 861.2,891.4 861.7,905.7 862.2,915.8 862.7,925.8 863.2,935.2 863.7,790.3 864.2,763.7 864.7,771.6 865.2,782.1 865.7,799.5 866.2,824.4 866.7,848.3 867.2,871.5 867.7,889.4 868.2,907.2 868.7,919 869.2,930.4 869.7,939.9 870.2,946.2 870.7,951 871.2,870.8 871.7,761.4 872.2,766 872.7,776.1 873.2,786.2 873.7,809.5 874.2,833.3 874.7,856 875.2,876.6 875.7,893.8 876.2,910 876.7,920.9 877.2,931.9 877.7,935.7 878.2,943.4 878.7,934.1 879.2,742.9 879.7,746.4 880.2,754.3 880.7,764.4 881.2,778.3 881.7,802.3 882.2,826 882.7,848.7 883.2,869.1 883.7,886.3 884.2,903.1 884.7,914.1 885.2,925.1 885.7,935.1 886.2,940.3 886.7,801.8 887.2,749.1 887.7,754.5 888.2,764.4 888.7,774.4 889.2,796.7 889.7,820.4 890.2,842.8 890.7,864.8 891.2,881.7 891.7,898.7 892.2,911.3 892.7,922.1 893.2,932.9 893.7,939.7 894.2,940.8 894.7,747.8 895.2,753.9 895.7,765.7 896.2,781.5 896.7,809.7 897.2,836.9 897.7,863.5 898.2,883.7 898.7,903.8 899.2,916.6 899.7,929.5 900.2,938.9 900.7,946 901.2,946.4 901.7,949 902.2,747.2 902.7,750.6 903.2,757.8 903.7,767.7 904.2,780.3 904.7,804 905.2,827.3 905.7,849.7 906.2,870.1 906.7,887.1 907.2,904 907.7,914.8 908.2,925.6 908.7,935.8 909.2,941.8 909.7,824.8 910.2,747.7 910.7,753 911.2,763.3 911.7,773.7 912.2,797.4 912.7,821.8 913.2,845.1 913.7,867 914.2,884.6 914.7,902.1 915.2,913.8 915.7,925 916.2,935.5 916.7,941.7 917.2,944.8 917.7,760 918.2,765.6 918.7,777.2 919.2,793 919.7,820.6 920.2,847.2 920.7,872.3 921.2,892.1 921.7,910.4 922.2,923 922.7,935.6 923.2,943.3 923.7,936.4 924.2,950.7 924.7,945.8 925.2,780.6 925.7,767.9 926.2,774 926.7,783.3 927.2,794.2 927.7,816.2 928.2,838 928.7,858.9 929.2,878.1 929.7,893.9 930.2,909.7 930.7,919.9 931.2,929.9 931.7,939.3 932.2,944.9 932.7,854.6 933.2,757.6 933.7,761.9 934.2,771.7 934.7,781.5 935.2,802.4 935.7,825.8 936.2,848 936.7,869.6 937.2,886.3 937.7,903 938.2,915.1 938.7,925.7 939.2,936.4 939.7,942.4 940.2,948.3 940.7,766.2 941.2,769.2 941.7,775.5 942.2,784.1 942.7,793.3 943.2,813.7 943.7,834.1 944.2,853.4 944.7,872.7 945.2,887.5 945.7,902.1 946.2,914.4 946.7,923.7 947.2,933 947.7,940.7 948.2,779.3 948.7,740.5 949.2,748.9 949.7,760.6 950.2,779.3 950.7,806.9 951.2,833.5 951.7,859.4 952.2,879.1 952.7,898.9 953.2,912.1 953.7,924.7 954.2,935.3 954.7,942.3 955.2,947.7 955.7,875.2 956.2,752.5 956.7,757.8 957.2,768.8 957.7,781.1 958.2,807.2 958.7,832.7 959.2,857.5 959.7,878.1 960.2,896.8 960.7,911.7 961.2,923.6 961.7,935.5 962.2,942.2 962.7,948.8 963.2,949 963.7,746.4 964.2,750 964.7,758.4 965.2,768.8 965.7,785.2 966.2,809.9 966.7,833.9 967.2,857.3 967.7,876.4 968.2,894.1 968.7,908.9 969.2,920.2 969.7,931.4 970.2,939.1 970.7,945.4 971.2,803.8 971.7,739.5 972.2,745.4 972.7,756 973.2,766.7 973.7,791.8 974.2,817 974.7,841 975.2,863.4 975.7,881.5 976.2,899.7 976.7,911.6 977.2,923.1 977.7,933.9 978.2,940.3 978.7,946.7 979.2,743 979.7,746.3 980.2,755 980.7,764.8 981.2,779.1 981.7,802.4 982.2,825.3 982.7,847.3 983.2,867.4 983.7,884 984.2,900.7 984.7,911.9 985.2,922.5 985.7,933.2 986.2,939.4 986.7,762.2 987.2,763.8 987.7,773.4 988.2,784.4 988.7,807 989.2,832.9 989.7,857.6 990.2,879.3 990.7,898 991.2,913.6 991.7,925.5 992.2,937.4 992.7,944 993.2,950.6 993.7,950.9 994.2,840.8 994.7,758.6 995.2,763.6 995.7,773.6 996.2,783.6 996.7,806.8 997.2,830.4 997.7,852.9 998.2,873.7 998.7,890.7 999.2,907.5 999.7,918.3 1000.2,929.1 1000.7,938.5 1001.2,944.5 1001.7,950.5 1002.2,764.7 1002.7,769.3 1003.2,780.2 1003.7,792.4 1004.2,818.4 1004.7,843.7 1005.2,868.3 1005.7,887.8 1006.2,906.4 1006.7,919.4 1007.2,931.2 1007.7,940.9 1008.2,947.5 1008.7,951.5 1009.2,951.5 1009.7,768.5 1010.2,745.3 1010.7,751.9 1011.2,762.2 1011.7,774 1012.2,798.5 1012.7,822.8 1013.2,846 1013.7,867.2 1014.2,884.8 1014.7,902.3 1015.2,913.5 1015.7,924.7 1016.2,935 1016.7,941.2 1017.2,857.2 1017.7,746.3 1018.2,752.7 1018.7,764.2 1019.2,779.5 1019.7,806.9 1020.2,833.5 1020.7,859.5 1021.2,879.8 1021.7,899.4 1022.2,913.2 1022.7,925.8 1023.2,936.5 1023.7,943.4 1024.2,948.7 1024.7,948.7 1025.2,751.9 1025.7,754.9 1026.2,760.4 1026.7,769 1027.2,777.7 1027.7,795.4 1028.2,816 1028.7,836 1029.2,855.5 1029.7,872.9 1030.2,887.6 1030.7,902.4 1031.2,913 1031.7,922.4 1032.2,931.8 1032.7,803.1 1033.2,757.8 1033.7,762.3 1034.2,771.6 1034.7,780.8 1035.2,799.4 1035.7,821.3 1036.2,842.3 1036.7,863 1037.2,879.9 1037.7,895.5 1038.2,909.6 1038.7,919.6 1039.2,929.6 1039.7,938.2 1040.2,887.5 1040.7,760.6 1041.2,767.1 1041.7,778.8 1042.2,796.7 1042.7,824.3 1043.2,850.7 1043.7,875 1044.2,894.8 1044.7,912.1 1045.2,924.7 1045.7,937.3 1046.2,944.2 1046.7,943.9 1047.2,941.5 1047.7,942.8 1048.2,752.1 1048.7,755.9 1049.2,765.6 1049.7,776.6 1050.2,798.2 1050.7,824.3 1051.2,849 1051.7,871.9 1052.2,890.6 1052.7,907.9 1053.2,919.8 1053.7,931.8 1054.2,940.2 1054.7,946.8 1055.2,949.8 1055.7,818.7 1056.2,747.6 1056.7,754.8 1057.2,766.1 1057.7,782.5 1058.2,809.4 1058.7,835.3 1059.2,860.7 1059.7,880.4 1060.2,899.6 1060.7,913.2 1061.2,925.4 1061.7,936.2 1062.2,943 1062.7,947 1063.2,948.8 1063.7,740.3 1064.2,744.1 1064.7,754.8 1065.2,765.7 1065.7,787.3 1066.2,813.2 1066.7,837.9 1067.2,861.8 1067.7,880.3 1068.2,898.8 1068.7,911.6 1069.2,923.4 1069.7,934.4 1070.2,940.9 1070.7,943 1071.2,752.1 1071.7,744.1 1072.2,751.9 1072.7,762.7 1073.2,778.1 1073.7,803.6 1074.2,828.5 1074.7,852.6 1075.2,872.8 1075.7,891.1 1076.2,906.6 1076.7,918.3 1077.2,929.9 1077.7,930.4 1078.2,944.5 1078.7,839.8 1079.2,741.7 1079.7,745.2 1080.2,754.9 1080.7,764.7 1081.2,781.2 1081.7,804.4 1082.2,826.9 1082.7,848.9 1083.2,868.2 1083.7,884.8 1084.2,901.4 1084.7,912 1085.2,922.6 1085.7,933.2 1086.2,937.2 1086.7,753.7 1087.2,756.9 1087.7,763.8 1088.2,772.9 1088.7,783.2 1089.2,804.9 1089.7,826.5 1090.2,847.1 1090.7,867.4 1091.2,882.9 1091.7,898.5 1092.2,911.1 1092.7,921 1093.2,930.9 1093.7,938.7 1094.2,787.7 1094.7,757.1 1095.2,765 1095.7,775.8 1096.2,793.2 1096.7,818.8 1097.2,843.4 1097.7,867.5 1098.2,885.8 1098.7,904.1 1099.2,916.5 1099.7,928.2 1100.2,938.3 1100.7,944.7 1101.2,949.6 1101.7,872.8 1102.2,759.1 1102.7,764.6 1103.2,775.4 1103.7,788.3 1104.2,813.9 1104.7,838.9 1105.2,863.2 1105.7,882.9 1106.2,901.2 1106.7,915.1 1107.2,926.8 1107.7,937.1 1108.2,943.2 1108.7,950.6 1109.2,945.6 1109.7,736.9 1110.2,740.4 1110.7,747.8 1111.2,757.9 1111.7,770 1112.2,794.1 1112.7,817.9 1113.2,840.6 1113.7,862.2 1114.2,879.4 1114.7,896.6 1115.2,909 1115.7,919.9 1116.2,930.9 1116.7,937.8 1117.2,816.2 1117.7,764 1118.2,771 1118.7,781.4 1119.2,796.8 1119.7,821.5 1120.2,845.4 1120.7,868.9 1121.2,887.1 1121.7,904.8 1122.2,917.5 1122.7,928.8 1123.2,939 1123.7,942.7 1124.2,951.1 1124.7,951.1 1125.2,762.9 1125.7,765.9 1126.2,773.2 1126.7,781.8 1127.2,792.7 1127.7,813.3 1128.2,833.7 1128.7,853.2 1129.2,872.3 1129.7,887.1 1130.2,901.8 1130.7,913.8 1131.2,923.2 1131.7,932.6 1132.2,940.1 1132.7,758.3 1133.2,761.9 1133.7,770.6 1134.2,781.1 1134.7,799.7 1135.2,824.6 1135.7,848.3 1136.2,871.2 1136.7,888.9 1137.2,906.7 1137.7,918.4 1138.2,929.7 1138.7,939.3 1139.2,945.6 1139.7,950.7 1140.2,823.5 1140.7,740.2 1141.2,743.9 1141.7,753.6 1142.2,763.4 1142.7,780 1143.2,803.1 1143.7,825.7 1144.2,847.5 1144.7,866.9 1145.2,883.5 1145.7,900 1146.2,910.9 1146.7,921.5 1147.2,932 1147.7,938.3 1148.2,741.5 1148.7,745.3 1149.2,755.7 1149.7,766.6 1150.2,787.9 1150.7,813.8 1151.2,838.5 1151.7,862.3 1152.2,880.8 1152.7,899.4 1153.2,912.1 1153.7,923.9 1154.2,934.7 1154.7,941.3 1155.2,941.9 1155.7,775.9 1156.2,759.5 1156.7,765.5 1157.2,774.9 1157.7,784.8 1158.2,807.4 1158.7,829.8 1159.2,851.1 1159.7,871.5 1160.2,887.6 1160.7,903.8 1161.2,915.3 1161.7,925.6 1162.2,935.8 1162.7,942 1163.2,849.5 1163.7,742.6 1164.2,748.1 1164.7,759.1 1165.2,770.5 1165.7,796.7 1166.2,822.6 1166.7,847.4 1167.2,869.4 1167.7,888.1 1168.2,905.1 1168.7,917 1169.2,929 1169.7,937.7 1170.2,944.3 1170.7,948.2 1171.2,739.6 1171.7,742.9 1172.2,749.6 1172.7,759.2 1173.2,768.7 1173.7,791.2 1174.2,813.8 1174.7,835.4 1175.2,856.9 1175.7,873.8 1176.2,890 1176.7,904.5 1177.2,914.9 1177.7,925.2 1178.2,934.6 1178.7,796.2 1179.2,756.5 1179.7,763.1 1180.2,773.3 1180.7,786.1 1181.2,810.4 1181.7,834.1 1182.2,857.1 1182.7,876.9 1183.2,894.2 1183.7,909.6 1184.2,920.7 1184.7,931.7 1185.2,939.9 1185.7,946 1186.2,883.2 1186.7,762.6 1187.2,767.3 1187.7,777.7 1188.2,788.1 1188.7,812.7 1189.2,836.8 1189.7,860.1 1190.2,880.2 1190.7,897.8 1191.2,912.9 1191.7,924.1 1192.2,935.3 1192.7,942.6 1193.2,945.8 1193.7,945.8 1194.2,742.9 1194.7,746.2 1195.2,752.2 1195.7,761.6 1196.2,771 1196.7,791.8 1197.2,814.1 1197.7,835.5 1198.2,856.7 1198.7,873.9 1199.2,889.9 1199.7,904.7 1200.2,914.9 1200.7,925.1 1201.2,934.7 1201.7,820.4 1202.2,757.5 1202.7,762.2 1203.2,771.7 1203.7,781.2 1204.2,801.5 1204.7,824.1 1205.2,845.7 1205.7,867.1 1206.2,883.5 1206.7,899.7 1207.2,912.6 1207.7,922.9 1208.2,933.2 1208.7,940.4 1209.2,946.1 1209.7,764.6 1210.2,768.9 1210.7,779.3 1211.2,789.8 1211.7,814.4 1212.2,838.8 1212.7,862.3 1213.2,882.3 1213.7,900.1 1214.2,914.8 1214.7,926.1 1215.2,937.4 1215.7,944 1216.2,950.3 1216.7,951.4 1217.2,744.8 1217.7,742.7 1218.2,751.3 1218.7,762.4 1219.2,780.3 1219.7,806.6 1220.2,832.1 1220.7,857 1221.2,876.5 1221.7,895.4 1222.2,909.6 1222.7,921.6 1223.2,933.4 1223.7,940.1 1224.2,946.8 1224.7,842.1 1225.2,755.6 1225.7,761.6 1226.2,772.3 1226.7,785.6 1227.2,811 1227.7,835.8 1228.2,859.8 1228.7,879.7 1229.2,897.9 1229.7,912.4 1230.2,924 1230.7,935.6 1231.2,942.3 1231.7,946.5 1232.2,950 1232.7,755.7 1233.2,760 1233.7,771.3 1234.2,782.6 1234.7,809.2 1235.2,835.3 1235.7,860.5 1236.2,881.2 1236.7,900.3 1237.2,914.7 1237.7,926.8 1238.2,937.8 1238.7,944.5 1239.2,950.2 1239.7,950.2 1240.2,777.5 1240.7,751.7 1241.2,759.5 1241.7,770.2 1242.2,786.6 1242.7,812.1 1243.2,836.8 1243.7,861 1244.2,880.1 1244.7,898.4 1245.2,912.3 1245.7,923.9 1246.2,935.4 1246.7,941.8 1247.2,948.3 1247.7,868.2 1248.2,760.4 1248.7,763.5 1249.2,772.3 1249.7,781.4 1250.2,796.3 1250.7,817.9 1251.2,838.9 1251.7,859.3 1252.2,877.3 1252.7,892.7 1253.2,908.1 1253.7,917.9 1254.2,927.7 1254.7,937.5 1255.2,942.9 1255.7,766.7 1256.2,770 1256.7,778 1257.2,787.5 1257.7,803 1258.2,825.6 1258.7,847.4 1259.2,868.8 1259.7,886.1 1260.2,902.2 1260.7,915.5 1261.2,925.8 1261.7,936.1 1262.2,937.7 1262.7,946.3 1263.2,806 1263.7,758.1 1264.2,766.6 1264.7,778 1265.2,798.8 1265.7,825.7 1266.2,851.3 1266.7,874.6 1267.2,893.9 1267.7,910.8 1268.2,923.2 1268.7,933.1 1269.2,942.7 1269.7,939.8 1270.2,940.1 1270.7,889.3 1271.2,756.7 1271.7,760.9 1272.2,771.4 1272.7,781.8 1273.2,805.2 1273.7,829.8 1274.2,853.2 1274.7,874.5 1275.2,892.2 1275.7,908.8 1276.2,920.1 1276.7,931.4 1277.2,939.9 1277.7,946.2 1278.2,945.9 1278.7,766.9 1279.2,770.5 1279.7,780 1280.2,790.5 1280.7,812.2 1281.2,837.1 1281.7,860.8 1282.2,881.8 1282.7,899.6 1283.2,915 1283.7,926.4 1284.2,937.8 1284.7,944.6 1285.2,950.9 1285.7,950.3 1286.2,829.2 1286.7,757.5 1287.2,762.3 1287.7,772.1 1288.2,781.8 1288.7,803.1 1289.2,826.2 1289.7,848.1 1290.2,869.4 1290.7,885.9 1291.2,902.4 1291.7,914.5 1292.2,925.1 1292.7,935.6 1293.2,941.9 1293.7,947.7 1294.2,744.4 1294.7,748 1295.2,758 1295.7,768.5 1296.2,788.2 1296.7,813.3 1297.2,837.3 1297.7,861 1298.2,879.1 1298.7,897 1299.2,910.5 1299.7,921.9 1300.2,933.4 1300.7,940 1301.2,940.2 1301.7,770.8 1302.2,760.7 1302.7,771.4 1303.2,783.2 1303.7,809.8 1304.2,837.2 1304.7,863.6 1305.2,884.8 1305.7,904.8 1306.2,918.4 1306.7,931.1 1307.2,935.2 1307.7,929.6 1308.2,929.8 1308.7,931.8 1309.2,846.7 1309.7,748.4 1310.2,755.7 1310.7,767.4 1311.2,785.5 1311.7,813.5 1312.2,840.4 1312.7,865.9 1313.2,886 1313.7,905.1 1314.2,917.9 1314.7,930.7 1315.2,939.5 1315.7,946.6 1316.2,938.9 1316.7,949 1317.2,748.4 1317.7,752.3 1318.2,763 1318.7,774.1 1319.2,797.6 1319.7,823.8 1320.2,848.7 1320.7,871.3 1321.2,890.1 1321.7,907.2 1322.2,919.3 1322.7,931.3 1323.2,939.6 1323.7,946.2 1324.2,949.2 1324.7,796.8 1325.2,763.3 1325.7,767.3 1326.2,775.9 1326.7,784.5 1327.2,800 1327.7,820.4 1328.2,840.3 1328.7,859.7 1329.2,877 1329.7,891.6 1330.2,906.2 1330.7,916.4 1331.2,925.7 1331.7,935.1 1332.2,880.3 1332.7,768 1333.2,772.7 1333.7,782.8 1334.2,793.2 1334.7,817.1 1335.2,840.7 1335.7,863.3 1336.2,882.9 1336.7,900 1337.2,914.7 1337.7,925.6 1338.2,936.5 1338.7,943.6 1339.2,949.6 1339.7,945.3 1340.2,745.9 1340.7,749 1341.2,754.4 1341.7,763.3 1342.2,772.2 1342.7,789.8 1343.2,811 1343.7,831.5 1344.2,851.6 1344.7,869.6 1345.2,884.7 1345.7,899.9 1346.2,910.9 1346.7,920.6 1347.2,930.2 1347.7,809.7 1348.2,751.3 1348.7,760.6 1349.2,772.6 1349.7,796 1350.2,824.5 1350.7,851.7 1351.2,875.3 1351.7,895.8 1352.2,912 1352.7,925.1 1353.2,936.8 1353.7,944 1354.2,949.3 1354.7,947.1 1355.2,949.3 1355.7,759.6 1356.2,765.9 1356.7,777.6 1357.2,795 1357.7,822.8 1358.2,849.4 1358.7,874.1 1359.2,894 1359.7,911.6 1360.2,924.3 1360.7,937 1361.2,944 1361.7,950.7 1362.2,950.7 1362.7,950.7 L1362.9,982.4 L287.2,982.4Z" fill="url(#g2)"/>
<path d="M288.1,982.4V739.8M295.8,982.4V761.4M303.5,982.4V754.8M311.2,982.4V763.2M318.8,982.4V746.6M326.5,982.4V742.3M334.2,982.4V754M341.9,982.4V743.1M349.6,982.4V753.4M357.3,982.4V742.6M364.9,982.4V756.2M372.6,982.4V734.3M380.3,982.4V751.2M388,982.4V764.8M395.7,982.4V762M403.4,982.4V742.2M411,982.4V737.8M418.7,982.4V745M426.4,982.4V760M434.1,982.4V737.6M441.8,982.4V742.4M449.5,982.4V761.3M457.1,982.4V753M464.8,982.4V743.9M472.5,982.4V764.8M480.2,982.4V763.6M487.9,982.4V753.8M495.6,982.4V737.5M503.2,982.4V733.7M510.9,982.4V754.9M518.6,982.4V736.4M526.3,982.4V740.3M534,982.4V737.8M541.7,982.4V746.5M549.3,982.4V734.5M557,982.4V744.7M564.7,982.4V735.2M572.4,982.4V747.2M580.1,982.4V758.7M587.8,982.4V748.7M595.4,982.4V749.8M603.1,982.4V754.3M610.8,982.4V753.2M618.5,982.4V748.9M626.2,982.4V746.5M633.9,982.4V757.9M641.5,982.4V756.2M649.2,982.4V749.1M656.9,982.4V749.1M664.6,982.4V751.8M672.3,982.4V744.1M680,982.4V759.1M687.6,982.4V748.2M695.3,982.4V756.3M703,982.4V740.8M710.7,982.4V742.9M718.4,982.4V740.4M726.1,982.4V748.7M733.7,982.4V757.1M741.4,982.4V735.9M749.1,982.4V748.9M756.8,982.4V753.1M764.5,982.4V755.8M772.2,982.4V752.3M779.8,982.4V742.7M787.5,982.4V739.3M795.2,982.4V749.8M802.9,982.4V742M810.6,982.4V758.2M818.3,982.4V750.7M825.9,982.4V753.7M833.6,982.4V755.3M841.3,982.4V753.6M849,982.4V741.3M856.7,982.4V741.9M864.4,982.4V758.4M872.1,982.4V757.6M879.7,982.4V740.3M887.4,982.4V744.4M895.1,982.4V743.7M902.8,982.4V745M910.5,982.4V743.2M918.2,982.4V756.4M925.8,982.4V763M933.5,982.4V753.6M941.2,982.4V763.9M948.9,982.4V734.8M956.6,982.4V748.5M964.3,982.4V743.9M971.9,982.4V734.6M979.6,982.4V739.7M987.3,982.4V757.7M995,982.4V754.3M1002.7,982.4V761.5M1010.4,982.4V740M1018,982.4V741.8M1025.7,982.4V749.6M1033.4,982.4V753.3M1041.1,982.4V756.4M1048.8,982.4V749.6M1056.5,982.4V742.6M1064.1,982.4V736.9M1071.8,982.4V738.3M1079.5,982.4V737.7M1087.2,982.4V751.1M1094.9,982.4V751.7M1102.6,982.4V755.1M1110.2,982.4V734.4M1117.9,982.4V759.2M1125.6,982.4V760M1133.3,982.4V756.1M1141,982.4V736M1148.7,982.4V738.2M1156.3,982.4V754.5M1164,982.4V738.2M1171.7,982.4V737M1179.4,982.4V751.5M1187.1,982.4V758.9M1194.8,982.4V740.7M1202.4,982.4V753.2M1210.1,982.4V761.2M1217.8,982.4V736.6M1225.5,982.4V751.1M1233.2,982.4V752.5M1240.9,982.4V746.3M1248.5,982.4V756.9M1256.2,982.4V764.3M1263.9,982.4V752.7M1271.6,982.4V753M1279.3,982.4V764.6M1287,982.4V753.3M1294.6,982.4V741.1M1302.3,982.4V754.5M1310,982.4V743.6M1317.7,982.4V745.3M1325.4,982.4V759M1333.1,982.4V764.3M1340.7,982.4V743.8M1348.4,982.4V745.8M1356.1,982.4V755.7" fill="none" stroke="url(#g3)" stroke-width="1.9"/>
</svg>
<div id="pill"><i>译</i></div>
<div id="strip"></div>
</div>
</body></html>
